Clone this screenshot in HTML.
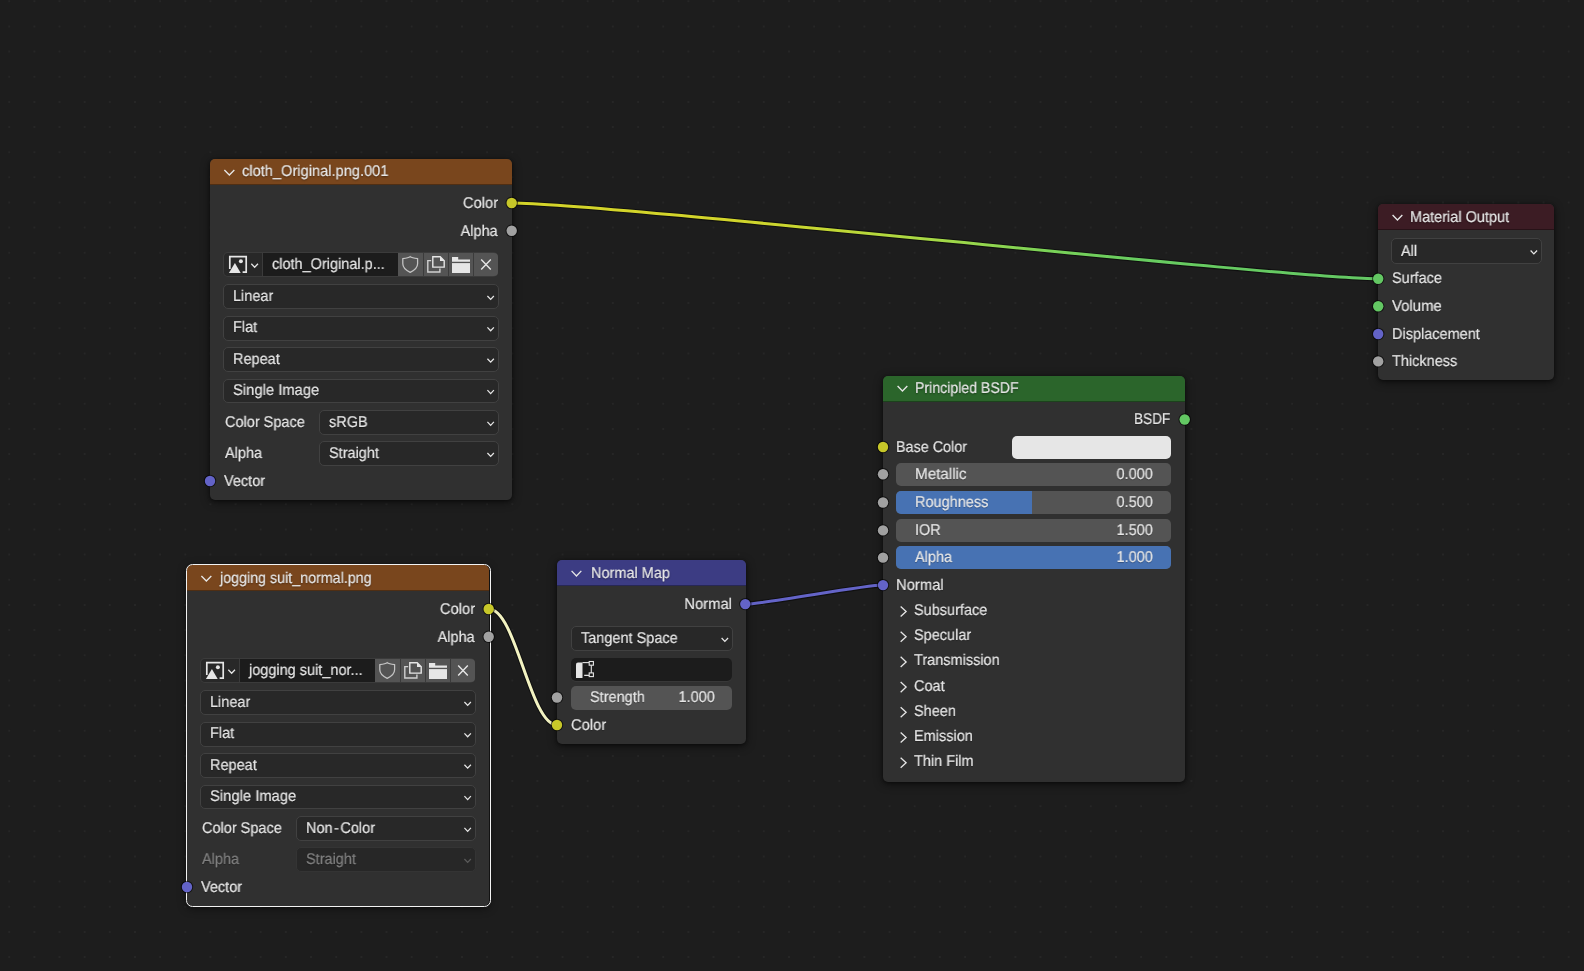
<!DOCTYPE html><html><head><meta charset="utf-8"><style>*{margin:0;padding:0}
html,body{width:1584px;height:971px;overflow:hidden;background:#1d1d1d}
body{position:relative;font-family:"Liberation Sans",sans-serif;font-size:15px}
div,svg{position:absolute}
.t{will-change:transform;white-space:pre;line-height:20px;font-size:15.5px;transform:scaleX(.935);text-rendering:geometricPrecision;-webkit-text-stroke:0.2px currentColor;text-shadow:0 1px 1px rgba(0,0,0,.3)}
.tr{text-align:right;transform-origin:100% 0}
</style></head><body><svg style="left:0;top:0" width="1584" height="971"><path d="M8.2 0.3h2v2h-2zM33.4 0.3h2v2h-2zM58.5 0.3h2v2h-2zM83.7 0.3h2v2h-2zM108.8 0.3h2v2h-2zM134.0 0.3h2v2h-2zM159.1 0.3h2v2h-2zM184.3 0.3h2v2h-2zM209.4 0.3h2v2h-2zM234.6 0.3h2v2h-2zM259.7 0.3h2v2h-2zM284.9 0.3h2v2h-2zM310.0 0.3h2v2h-2zM335.2 0.3h2v2h-2zM360.4 0.3h2v2h-2zM385.5 0.3h2v2h-2zM410.7 0.3h2v2h-2zM435.8 0.3h2v2h-2zM461.0 0.3h2v2h-2zM486.1 0.3h2v2h-2zM511.3 0.3h2v2h-2zM536.4 0.3h2v2h-2zM561.6 0.3h2v2h-2zM586.7 0.3h2v2h-2zM611.9 0.3h2v2h-2zM637.1 0.3h2v2h-2zM662.2 0.3h2v2h-2zM687.4 0.3h2v2h-2zM712.5 0.3h2v2h-2zM737.7 0.3h2v2h-2zM762.8 0.3h2v2h-2zM788.0 0.3h2v2h-2zM813.1 0.3h2v2h-2zM838.3 0.3h2v2h-2zM863.4 0.3h2v2h-2zM888.6 0.3h2v2h-2zM913.7 0.3h2v2h-2zM938.9 0.3h2v2h-2zM964.1 0.3h2v2h-2zM989.2 0.3h2v2h-2zM1014.4 0.3h2v2h-2zM1039.5 0.3h2v2h-2zM1064.7 0.3h2v2h-2zM1089.8 0.3h2v2h-2zM1115.0 0.3h2v2h-2zM1140.1 0.3h2v2h-2zM1165.3 0.3h2v2h-2zM1190.4 0.3h2v2h-2zM1215.6 0.3h2v2h-2zM1240.7 0.3h2v2h-2zM1265.9 0.3h2v2h-2zM1291.1 0.3h2v2h-2zM1316.2 0.3h2v2h-2zM1341.4 0.3h2v2h-2zM1366.5 0.3h2v2h-2zM1391.7 0.3h2v2h-2zM1416.8 0.3h2v2h-2zM1442.0 0.3h2v2h-2zM1467.1 0.3h2v2h-2zM1492.3 0.3h2v2h-2zM1517.4 0.3h2v2h-2zM1542.6 0.3h2v2h-2zM1567.7 0.3h2v2h-2zM8.2 25.4h2v2h-2zM33.4 25.4h2v2h-2zM58.5 25.4h2v2h-2zM83.7 25.4h2v2h-2zM108.8 25.4h2v2h-2zM134.0 25.4h2v2h-2zM159.1 25.4h2v2h-2zM184.3 25.4h2v2h-2zM209.4 25.4h2v2h-2zM234.6 25.4h2v2h-2zM259.7 25.4h2v2h-2zM284.9 25.4h2v2h-2zM310.0 25.4h2v2h-2zM335.2 25.4h2v2h-2zM360.4 25.4h2v2h-2zM385.5 25.4h2v2h-2zM410.7 25.4h2v2h-2zM435.8 25.4h2v2h-2zM461.0 25.4h2v2h-2zM486.1 25.4h2v2h-2zM511.3 25.4h2v2h-2zM536.4 25.4h2v2h-2zM561.6 25.4h2v2h-2zM586.7 25.4h2v2h-2zM611.9 25.4h2v2h-2zM637.1 25.4h2v2h-2zM662.2 25.4h2v2h-2zM687.4 25.4h2v2h-2zM712.5 25.4h2v2h-2zM737.7 25.4h2v2h-2zM762.8 25.4h2v2h-2zM788.0 25.4h2v2h-2zM813.1 25.4h2v2h-2zM838.3 25.4h2v2h-2zM863.4 25.4h2v2h-2zM888.6 25.4h2v2h-2zM913.7 25.4h2v2h-2zM938.9 25.4h2v2h-2zM964.1 25.4h2v2h-2zM989.2 25.4h2v2h-2zM1014.4 25.4h2v2h-2zM1039.5 25.4h2v2h-2zM1064.7 25.4h2v2h-2zM1089.8 25.4h2v2h-2zM1115.0 25.4h2v2h-2zM1140.1 25.4h2v2h-2zM1165.3 25.4h2v2h-2zM1190.4 25.4h2v2h-2zM1215.6 25.4h2v2h-2zM1240.7 25.4h2v2h-2zM1265.9 25.4h2v2h-2zM1291.1 25.4h2v2h-2zM1316.2 25.4h2v2h-2zM1341.4 25.4h2v2h-2zM1366.5 25.4h2v2h-2zM1391.7 25.4h2v2h-2zM1416.8 25.4h2v2h-2zM1442.0 25.4h2v2h-2zM1467.1 25.4h2v2h-2zM1492.3 25.4h2v2h-2zM1517.4 25.4h2v2h-2zM1542.6 25.4h2v2h-2zM1567.7 25.4h2v2h-2zM8.2 50.6h2v2h-2zM33.4 50.6h2v2h-2zM58.5 50.6h2v2h-2zM83.7 50.6h2v2h-2zM108.8 50.6h2v2h-2zM134.0 50.6h2v2h-2zM159.1 50.6h2v2h-2zM184.3 50.6h2v2h-2zM209.4 50.6h2v2h-2zM234.6 50.6h2v2h-2zM259.7 50.6h2v2h-2zM284.9 50.6h2v2h-2zM310.0 50.6h2v2h-2zM335.2 50.6h2v2h-2zM360.4 50.6h2v2h-2zM385.5 50.6h2v2h-2zM410.7 50.6h2v2h-2zM435.8 50.6h2v2h-2zM461.0 50.6h2v2h-2zM486.1 50.6h2v2h-2zM511.3 50.6h2v2h-2zM536.4 50.6h2v2h-2zM561.6 50.6h2v2h-2zM586.7 50.6h2v2h-2zM611.9 50.6h2v2h-2zM637.1 50.6h2v2h-2zM662.2 50.6h2v2h-2zM687.4 50.6h2v2h-2zM712.5 50.6h2v2h-2zM737.7 50.6h2v2h-2zM762.8 50.6h2v2h-2zM788.0 50.6h2v2h-2zM813.1 50.6h2v2h-2zM838.3 50.6h2v2h-2zM863.4 50.6h2v2h-2zM888.6 50.6h2v2h-2zM913.7 50.6h2v2h-2zM938.9 50.6h2v2h-2zM964.1 50.6h2v2h-2zM989.2 50.6h2v2h-2zM1014.4 50.6h2v2h-2zM1039.5 50.6h2v2h-2zM1064.7 50.6h2v2h-2zM1089.8 50.6h2v2h-2zM1115.0 50.6h2v2h-2zM1140.1 50.6h2v2h-2zM1165.3 50.6h2v2h-2zM1190.4 50.6h2v2h-2zM1215.6 50.6h2v2h-2zM1240.7 50.6h2v2h-2zM1265.9 50.6h2v2h-2zM1291.1 50.6h2v2h-2zM1316.2 50.6h2v2h-2zM1341.4 50.6h2v2h-2zM1366.5 50.6h2v2h-2zM1391.7 50.6h2v2h-2zM1416.8 50.6h2v2h-2zM1442.0 50.6h2v2h-2zM1467.1 50.6h2v2h-2zM1492.3 50.6h2v2h-2zM1517.4 50.6h2v2h-2zM1542.6 50.6h2v2h-2zM1567.7 50.6h2v2h-2zM8.2 75.7h2v2h-2zM33.4 75.7h2v2h-2zM58.5 75.7h2v2h-2zM83.7 75.7h2v2h-2zM108.8 75.7h2v2h-2zM134.0 75.7h2v2h-2zM159.1 75.7h2v2h-2zM184.3 75.7h2v2h-2zM209.4 75.7h2v2h-2zM234.6 75.7h2v2h-2zM259.7 75.7h2v2h-2zM284.9 75.7h2v2h-2zM310.0 75.7h2v2h-2zM335.2 75.7h2v2h-2zM360.4 75.7h2v2h-2zM385.5 75.7h2v2h-2zM410.7 75.7h2v2h-2zM435.8 75.7h2v2h-2zM461.0 75.7h2v2h-2zM486.1 75.7h2v2h-2zM511.3 75.7h2v2h-2zM536.4 75.7h2v2h-2zM561.6 75.7h2v2h-2zM586.7 75.7h2v2h-2zM611.9 75.7h2v2h-2zM637.1 75.7h2v2h-2zM662.2 75.7h2v2h-2zM687.4 75.7h2v2h-2zM712.5 75.7h2v2h-2zM737.7 75.7h2v2h-2zM762.8 75.7h2v2h-2zM788.0 75.7h2v2h-2zM813.1 75.7h2v2h-2zM838.3 75.7h2v2h-2zM863.4 75.7h2v2h-2zM888.6 75.7h2v2h-2zM913.7 75.7h2v2h-2zM938.9 75.7h2v2h-2zM964.1 75.7h2v2h-2zM989.2 75.7h2v2h-2zM1014.4 75.7h2v2h-2zM1039.5 75.7h2v2h-2zM1064.7 75.7h2v2h-2zM1089.8 75.7h2v2h-2zM1115.0 75.7h2v2h-2zM1140.1 75.7h2v2h-2zM1165.3 75.7h2v2h-2zM1190.4 75.7h2v2h-2zM1215.6 75.7h2v2h-2zM1240.7 75.7h2v2h-2zM1265.9 75.7h2v2h-2zM1291.1 75.7h2v2h-2zM1316.2 75.7h2v2h-2zM1341.4 75.7h2v2h-2zM1366.5 75.7h2v2h-2zM1391.7 75.7h2v2h-2zM1416.8 75.7h2v2h-2zM1442.0 75.7h2v2h-2zM1467.1 75.7h2v2h-2zM1492.3 75.7h2v2h-2zM1517.4 75.7h2v2h-2zM1542.6 75.7h2v2h-2zM1567.7 75.7h2v2h-2zM8.2 100.9h2v2h-2zM33.4 100.9h2v2h-2zM58.5 100.9h2v2h-2zM83.7 100.9h2v2h-2zM108.8 100.9h2v2h-2zM134.0 100.9h2v2h-2zM159.1 100.9h2v2h-2zM184.3 100.9h2v2h-2zM209.4 100.9h2v2h-2zM234.6 100.9h2v2h-2zM259.7 100.9h2v2h-2zM284.9 100.9h2v2h-2zM310.0 100.9h2v2h-2zM335.2 100.9h2v2h-2zM360.4 100.9h2v2h-2zM385.5 100.9h2v2h-2zM410.7 100.9h2v2h-2zM435.8 100.9h2v2h-2zM461.0 100.9h2v2h-2zM486.1 100.9h2v2h-2zM511.3 100.9h2v2h-2zM536.4 100.9h2v2h-2zM561.6 100.9h2v2h-2zM586.7 100.9h2v2h-2zM611.9 100.9h2v2h-2zM637.1 100.9h2v2h-2zM662.2 100.9h2v2h-2zM687.4 100.9h2v2h-2zM712.5 100.9h2v2h-2zM737.7 100.9h2v2h-2zM762.8 100.9h2v2h-2zM788.0 100.9h2v2h-2zM813.1 100.9h2v2h-2zM838.3 100.9h2v2h-2zM863.4 100.9h2v2h-2zM888.6 100.9h2v2h-2zM913.7 100.9h2v2h-2zM938.9 100.9h2v2h-2zM964.1 100.9h2v2h-2zM989.2 100.9h2v2h-2zM1014.4 100.9h2v2h-2zM1039.5 100.9h2v2h-2zM1064.7 100.9h2v2h-2zM1089.8 100.9h2v2h-2zM1115.0 100.9h2v2h-2zM1140.1 100.9h2v2h-2zM1165.3 100.9h2v2h-2zM1190.4 100.9h2v2h-2zM1215.6 100.9h2v2h-2zM1240.7 100.9h2v2h-2zM1265.9 100.9h2v2h-2zM1291.1 100.9h2v2h-2zM1316.2 100.9h2v2h-2zM1341.4 100.9h2v2h-2zM1366.5 100.9h2v2h-2zM1391.7 100.9h2v2h-2zM1416.8 100.9h2v2h-2zM1442.0 100.9h2v2h-2zM1467.1 100.9h2v2h-2zM1492.3 100.9h2v2h-2zM1517.4 100.9h2v2h-2zM1542.6 100.9h2v2h-2zM1567.7 100.9h2v2h-2zM8.2 126.0h2v2h-2zM33.4 126.0h2v2h-2zM58.5 126.0h2v2h-2zM83.7 126.0h2v2h-2zM108.8 126.0h2v2h-2zM134.0 126.0h2v2h-2zM159.1 126.0h2v2h-2zM184.3 126.0h2v2h-2zM209.4 126.0h2v2h-2zM234.6 126.0h2v2h-2zM259.7 126.0h2v2h-2zM284.9 126.0h2v2h-2zM310.0 126.0h2v2h-2zM335.2 126.0h2v2h-2zM360.4 126.0h2v2h-2zM385.5 126.0h2v2h-2zM410.7 126.0h2v2h-2zM435.8 126.0h2v2h-2zM461.0 126.0h2v2h-2zM486.1 126.0h2v2h-2zM511.3 126.0h2v2h-2zM536.4 126.0h2v2h-2zM561.6 126.0h2v2h-2zM586.7 126.0h2v2h-2zM611.9 126.0h2v2h-2zM637.1 126.0h2v2h-2zM662.2 126.0h2v2h-2zM687.4 126.0h2v2h-2zM712.5 126.0h2v2h-2zM737.7 126.0h2v2h-2zM762.8 126.0h2v2h-2zM788.0 126.0h2v2h-2zM813.1 126.0h2v2h-2zM838.3 126.0h2v2h-2zM863.4 126.0h2v2h-2zM888.6 126.0h2v2h-2zM913.7 126.0h2v2h-2zM938.9 126.0h2v2h-2zM964.1 126.0h2v2h-2zM989.2 126.0h2v2h-2zM1014.4 126.0h2v2h-2zM1039.5 126.0h2v2h-2zM1064.7 126.0h2v2h-2zM1089.8 126.0h2v2h-2zM1115.0 126.0h2v2h-2zM1140.1 126.0h2v2h-2zM1165.3 126.0h2v2h-2zM1190.4 126.0h2v2h-2zM1215.6 126.0h2v2h-2zM1240.7 126.0h2v2h-2zM1265.9 126.0h2v2h-2zM1291.1 126.0h2v2h-2zM1316.2 126.0h2v2h-2zM1341.4 126.0h2v2h-2zM1366.5 126.0h2v2h-2zM1391.7 126.0h2v2h-2zM1416.8 126.0h2v2h-2zM1442.0 126.0h2v2h-2zM1467.1 126.0h2v2h-2zM1492.3 126.0h2v2h-2zM1517.4 126.0h2v2h-2zM1542.6 126.0h2v2h-2zM1567.7 126.0h2v2h-2zM8.2 151.2h2v2h-2zM33.4 151.2h2v2h-2zM58.5 151.2h2v2h-2zM83.7 151.2h2v2h-2zM108.8 151.2h2v2h-2zM134.0 151.2h2v2h-2zM159.1 151.2h2v2h-2zM184.3 151.2h2v2h-2zM209.4 151.2h2v2h-2zM234.6 151.2h2v2h-2zM259.7 151.2h2v2h-2zM284.9 151.2h2v2h-2zM310.0 151.2h2v2h-2zM335.2 151.2h2v2h-2zM360.4 151.2h2v2h-2zM385.5 151.2h2v2h-2zM410.7 151.2h2v2h-2zM435.8 151.2h2v2h-2zM461.0 151.2h2v2h-2zM486.1 151.2h2v2h-2zM511.3 151.2h2v2h-2zM536.4 151.2h2v2h-2zM561.6 151.2h2v2h-2zM586.7 151.2h2v2h-2zM611.9 151.2h2v2h-2zM637.1 151.2h2v2h-2zM662.2 151.2h2v2h-2zM687.4 151.2h2v2h-2zM712.5 151.2h2v2h-2zM737.7 151.2h2v2h-2zM762.8 151.2h2v2h-2zM788.0 151.2h2v2h-2zM813.1 151.2h2v2h-2zM838.3 151.2h2v2h-2zM863.4 151.2h2v2h-2zM888.6 151.2h2v2h-2zM913.7 151.2h2v2h-2zM938.9 151.2h2v2h-2zM964.1 151.2h2v2h-2zM989.2 151.2h2v2h-2zM1014.4 151.2h2v2h-2zM1039.5 151.2h2v2h-2zM1064.7 151.2h2v2h-2zM1089.8 151.2h2v2h-2zM1115.0 151.2h2v2h-2zM1140.1 151.2h2v2h-2zM1165.3 151.2h2v2h-2zM1190.4 151.2h2v2h-2zM1215.6 151.2h2v2h-2zM1240.7 151.2h2v2h-2zM1265.9 151.2h2v2h-2zM1291.1 151.2h2v2h-2zM1316.2 151.2h2v2h-2zM1341.4 151.2h2v2h-2zM1366.5 151.2h2v2h-2zM1391.7 151.2h2v2h-2zM1416.8 151.2h2v2h-2zM1442.0 151.2h2v2h-2zM1467.1 151.2h2v2h-2zM1492.3 151.2h2v2h-2zM1517.4 151.2h2v2h-2zM1542.6 151.2h2v2h-2zM1567.7 151.2h2v2h-2zM8.2 176.3h2v2h-2zM33.4 176.3h2v2h-2zM58.5 176.3h2v2h-2zM83.7 176.3h2v2h-2zM108.8 176.3h2v2h-2zM134.0 176.3h2v2h-2zM159.1 176.3h2v2h-2zM184.3 176.3h2v2h-2zM209.4 176.3h2v2h-2zM234.6 176.3h2v2h-2zM259.7 176.3h2v2h-2zM284.9 176.3h2v2h-2zM310.0 176.3h2v2h-2zM335.2 176.3h2v2h-2zM360.4 176.3h2v2h-2zM385.5 176.3h2v2h-2zM410.7 176.3h2v2h-2zM435.8 176.3h2v2h-2zM461.0 176.3h2v2h-2zM486.1 176.3h2v2h-2zM511.3 176.3h2v2h-2zM536.4 176.3h2v2h-2zM561.6 176.3h2v2h-2zM586.7 176.3h2v2h-2zM611.9 176.3h2v2h-2zM637.1 176.3h2v2h-2zM662.2 176.3h2v2h-2zM687.4 176.3h2v2h-2zM712.5 176.3h2v2h-2zM737.7 176.3h2v2h-2zM762.8 176.3h2v2h-2zM788.0 176.3h2v2h-2zM813.1 176.3h2v2h-2zM838.3 176.3h2v2h-2zM863.4 176.3h2v2h-2zM888.6 176.3h2v2h-2zM913.7 176.3h2v2h-2zM938.9 176.3h2v2h-2zM964.1 176.3h2v2h-2zM989.2 176.3h2v2h-2zM1014.4 176.3h2v2h-2zM1039.5 176.3h2v2h-2zM1064.7 176.3h2v2h-2zM1089.8 176.3h2v2h-2zM1115.0 176.3h2v2h-2zM1140.1 176.3h2v2h-2zM1165.3 176.3h2v2h-2zM1190.4 176.3h2v2h-2zM1215.6 176.3h2v2h-2zM1240.7 176.3h2v2h-2zM1265.9 176.3h2v2h-2zM1291.1 176.3h2v2h-2zM1316.2 176.3h2v2h-2zM1341.4 176.3h2v2h-2zM1366.5 176.3h2v2h-2zM1391.7 176.3h2v2h-2zM1416.8 176.3h2v2h-2zM1442.0 176.3h2v2h-2zM1467.1 176.3h2v2h-2zM1492.3 176.3h2v2h-2zM1517.4 176.3h2v2h-2zM1542.6 176.3h2v2h-2zM1567.7 176.3h2v2h-2zM8.2 201.5h2v2h-2zM33.4 201.5h2v2h-2zM58.5 201.5h2v2h-2zM83.7 201.5h2v2h-2zM108.8 201.5h2v2h-2zM134.0 201.5h2v2h-2zM159.1 201.5h2v2h-2zM184.3 201.5h2v2h-2zM209.4 201.5h2v2h-2zM234.6 201.5h2v2h-2zM259.7 201.5h2v2h-2zM284.9 201.5h2v2h-2zM310.0 201.5h2v2h-2zM335.2 201.5h2v2h-2zM360.4 201.5h2v2h-2zM385.5 201.5h2v2h-2zM410.7 201.5h2v2h-2zM435.8 201.5h2v2h-2zM461.0 201.5h2v2h-2zM486.1 201.5h2v2h-2zM511.3 201.5h2v2h-2zM536.4 201.5h2v2h-2zM561.6 201.5h2v2h-2zM586.7 201.5h2v2h-2zM611.9 201.5h2v2h-2zM637.1 201.5h2v2h-2zM662.2 201.5h2v2h-2zM687.4 201.5h2v2h-2zM712.5 201.5h2v2h-2zM737.7 201.5h2v2h-2zM762.8 201.5h2v2h-2zM788.0 201.5h2v2h-2zM813.1 201.5h2v2h-2zM838.3 201.5h2v2h-2zM863.4 201.5h2v2h-2zM888.6 201.5h2v2h-2zM913.7 201.5h2v2h-2zM938.9 201.5h2v2h-2zM964.1 201.5h2v2h-2zM989.2 201.5h2v2h-2zM1014.4 201.5h2v2h-2zM1039.5 201.5h2v2h-2zM1064.7 201.5h2v2h-2zM1089.8 201.5h2v2h-2zM1115.0 201.5h2v2h-2zM1140.1 201.5h2v2h-2zM1165.3 201.5h2v2h-2zM1190.4 201.5h2v2h-2zM1215.6 201.5h2v2h-2zM1240.7 201.5h2v2h-2zM1265.9 201.5h2v2h-2zM1291.1 201.5h2v2h-2zM1316.2 201.5h2v2h-2zM1341.4 201.5h2v2h-2zM1366.5 201.5h2v2h-2zM1391.7 201.5h2v2h-2zM1416.8 201.5h2v2h-2zM1442.0 201.5h2v2h-2zM1467.1 201.5h2v2h-2zM1492.3 201.5h2v2h-2zM1517.4 201.5h2v2h-2zM1542.6 201.5h2v2h-2zM1567.7 201.5h2v2h-2zM8.2 226.6h2v2h-2zM33.4 226.6h2v2h-2zM58.5 226.6h2v2h-2zM83.7 226.6h2v2h-2zM108.8 226.6h2v2h-2zM134.0 226.6h2v2h-2zM159.1 226.6h2v2h-2zM184.3 226.6h2v2h-2zM209.4 226.6h2v2h-2zM234.6 226.6h2v2h-2zM259.7 226.6h2v2h-2zM284.9 226.6h2v2h-2zM310.0 226.6h2v2h-2zM335.2 226.6h2v2h-2zM360.4 226.6h2v2h-2zM385.5 226.6h2v2h-2zM410.7 226.6h2v2h-2zM435.8 226.6h2v2h-2zM461.0 226.6h2v2h-2zM486.1 226.6h2v2h-2zM511.3 226.6h2v2h-2zM536.4 226.6h2v2h-2zM561.6 226.6h2v2h-2zM586.7 226.6h2v2h-2zM611.9 226.6h2v2h-2zM637.1 226.6h2v2h-2zM662.2 226.6h2v2h-2zM687.4 226.6h2v2h-2zM712.5 226.6h2v2h-2zM737.7 226.6h2v2h-2zM762.8 226.6h2v2h-2zM788.0 226.6h2v2h-2zM813.1 226.6h2v2h-2zM838.3 226.6h2v2h-2zM863.4 226.6h2v2h-2zM888.6 226.6h2v2h-2zM913.7 226.6h2v2h-2zM938.9 226.6h2v2h-2zM964.1 226.6h2v2h-2zM989.2 226.6h2v2h-2zM1014.4 226.6h2v2h-2zM1039.5 226.6h2v2h-2zM1064.7 226.6h2v2h-2zM1089.8 226.6h2v2h-2zM1115.0 226.6h2v2h-2zM1140.1 226.6h2v2h-2zM1165.3 226.6h2v2h-2zM1190.4 226.6h2v2h-2zM1215.6 226.6h2v2h-2zM1240.7 226.6h2v2h-2zM1265.9 226.6h2v2h-2zM1291.1 226.6h2v2h-2zM1316.2 226.6h2v2h-2zM1341.4 226.6h2v2h-2zM1366.5 226.6h2v2h-2zM1391.7 226.6h2v2h-2zM1416.8 226.6h2v2h-2zM1442.0 226.6h2v2h-2zM1467.1 226.6h2v2h-2zM1492.3 226.6h2v2h-2zM1517.4 226.6h2v2h-2zM1542.6 226.6h2v2h-2zM1567.7 226.6h2v2h-2zM8.2 251.8h2v2h-2zM33.4 251.8h2v2h-2zM58.5 251.8h2v2h-2zM83.7 251.8h2v2h-2zM108.8 251.8h2v2h-2zM134.0 251.8h2v2h-2zM159.1 251.8h2v2h-2zM184.3 251.8h2v2h-2zM209.4 251.8h2v2h-2zM234.6 251.8h2v2h-2zM259.7 251.8h2v2h-2zM284.9 251.8h2v2h-2zM310.0 251.8h2v2h-2zM335.2 251.8h2v2h-2zM360.4 251.8h2v2h-2zM385.5 251.8h2v2h-2zM410.7 251.8h2v2h-2zM435.8 251.8h2v2h-2zM461.0 251.8h2v2h-2zM486.1 251.8h2v2h-2zM511.3 251.8h2v2h-2zM536.4 251.8h2v2h-2zM561.6 251.8h2v2h-2zM586.7 251.8h2v2h-2zM611.9 251.8h2v2h-2zM637.1 251.8h2v2h-2zM662.2 251.8h2v2h-2zM687.4 251.8h2v2h-2zM712.5 251.8h2v2h-2zM737.7 251.8h2v2h-2zM762.8 251.8h2v2h-2zM788.0 251.8h2v2h-2zM813.1 251.8h2v2h-2zM838.3 251.8h2v2h-2zM863.4 251.8h2v2h-2zM888.6 251.8h2v2h-2zM913.7 251.8h2v2h-2zM938.9 251.8h2v2h-2zM964.1 251.8h2v2h-2zM989.2 251.8h2v2h-2zM1014.4 251.8h2v2h-2zM1039.5 251.8h2v2h-2zM1064.7 251.8h2v2h-2zM1089.8 251.8h2v2h-2zM1115.0 251.8h2v2h-2zM1140.1 251.8h2v2h-2zM1165.3 251.8h2v2h-2zM1190.4 251.8h2v2h-2zM1215.6 251.8h2v2h-2zM1240.7 251.8h2v2h-2zM1265.9 251.8h2v2h-2zM1291.1 251.8h2v2h-2zM1316.2 251.8h2v2h-2zM1341.4 251.8h2v2h-2zM1366.5 251.8h2v2h-2zM1391.7 251.8h2v2h-2zM1416.8 251.8h2v2h-2zM1442.0 251.8h2v2h-2zM1467.1 251.8h2v2h-2zM1492.3 251.8h2v2h-2zM1517.4 251.8h2v2h-2zM1542.6 251.8h2v2h-2zM1567.7 251.8h2v2h-2zM8.2 277.0h2v2h-2zM33.4 277.0h2v2h-2zM58.5 277.0h2v2h-2zM83.7 277.0h2v2h-2zM108.8 277.0h2v2h-2zM134.0 277.0h2v2h-2zM159.1 277.0h2v2h-2zM184.3 277.0h2v2h-2zM209.4 277.0h2v2h-2zM234.6 277.0h2v2h-2zM259.7 277.0h2v2h-2zM284.9 277.0h2v2h-2zM310.0 277.0h2v2h-2zM335.2 277.0h2v2h-2zM360.4 277.0h2v2h-2zM385.5 277.0h2v2h-2zM410.7 277.0h2v2h-2zM435.8 277.0h2v2h-2zM461.0 277.0h2v2h-2zM486.1 277.0h2v2h-2zM511.3 277.0h2v2h-2zM536.4 277.0h2v2h-2zM561.6 277.0h2v2h-2zM586.7 277.0h2v2h-2zM611.9 277.0h2v2h-2zM637.1 277.0h2v2h-2zM662.2 277.0h2v2h-2zM687.4 277.0h2v2h-2zM712.5 277.0h2v2h-2zM737.7 277.0h2v2h-2zM762.8 277.0h2v2h-2zM788.0 277.0h2v2h-2zM813.1 277.0h2v2h-2zM838.3 277.0h2v2h-2zM863.4 277.0h2v2h-2zM888.6 277.0h2v2h-2zM913.7 277.0h2v2h-2zM938.9 277.0h2v2h-2zM964.1 277.0h2v2h-2zM989.2 277.0h2v2h-2zM1014.4 277.0h2v2h-2zM1039.5 277.0h2v2h-2zM1064.7 277.0h2v2h-2zM1089.8 277.0h2v2h-2zM1115.0 277.0h2v2h-2zM1140.1 277.0h2v2h-2zM1165.3 277.0h2v2h-2zM1190.4 277.0h2v2h-2zM1215.6 277.0h2v2h-2zM1240.7 277.0h2v2h-2zM1265.9 277.0h2v2h-2zM1291.1 277.0h2v2h-2zM1316.2 277.0h2v2h-2zM1341.4 277.0h2v2h-2zM1366.5 277.0h2v2h-2zM1391.7 277.0h2v2h-2zM1416.8 277.0h2v2h-2zM1442.0 277.0h2v2h-2zM1467.1 277.0h2v2h-2zM1492.3 277.0h2v2h-2zM1517.4 277.0h2v2h-2zM1542.6 277.0h2v2h-2zM1567.7 277.0h2v2h-2zM8.2 302.1h2v2h-2zM33.4 302.1h2v2h-2zM58.5 302.1h2v2h-2zM83.7 302.1h2v2h-2zM108.8 302.1h2v2h-2zM134.0 302.1h2v2h-2zM159.1 302.1h2v2h-2zM184.3 302.1h2v2h-2zM209.4 302.1h2v2h-2zM234.6 302.1h2v2h-2zM259.7 302.1h2v2h-2zM284.9 302.1h2v2h-2zM310.0 302.1h2v2h-2zM335.2 302.1h2v2h-2zM360.4 302.1h2v2h-2zM385.5 302.1h2v2h-2zM410.7 302.1h2v2h-2zM435.8 302.1h2v2h-2zM461.0 302.1h2v2h-2zM486.1 302.1h2v2h-2zM511.3 302.1h2v2h-2zM536.4 302.1h2v2h-2zM561.6 302.1h2v2h-2zM586.7 302.1h2v2h-2zM611.9 302.1h2v2h-2zM637.1 302.1h2v2h-2zM662.2 302.1h2v2h-2zM687.4 302.1h2v2h-2zM712.5 302.1h2v2h-2zM737.7 302.1h2v2h-2zM762.8 302.1h2v2h-2zM788.0 302.1h2v2h-2zM813.1 302.1h2v2h-2zM838.3 302.1h2v2h-2zM863.4 302.1h2v2h-2zM888.6 302.1h2v2h-2zM913.7 302.1h2v2h-2zM938.9 302.1h2v2h-2zM964.1 302.1h2v2h-2zM989.2 302.1h2v2h-2zM1014.4 302.1h2v2h-2zM1039.5 302.1h2v2h-2zM1064.7 302.1h2v2h-2zM1089.8 302.1h2v2h-2zM1115.0 302.1h2v2h-2zM1140.1 302.1h2v2h-2zM1165.3 302.1h2v2h-2zM1190.4 302.1h2v2h-2zM1215.6 302.1h2v2h-2zM1240.7 302.1h2v2h-2zM1265.9 302.1h2v2h-2zM1291.1 302.1h2v2h-2zM1316.2 302.1h2v2h-2zM1341.4 302.1h2v2h-2zM1366.5 302.1h2v2h-2zM1391.7 302.1h2v2h-2zM1416.8 302.1h2v2h-2zM1442.0 302.1h2v2h-2zM1467.1 302.1h2v2h-2zM1492.3 302.1h2v2h-2zM1517.4 302.1h2v2h-2zM1542.6 302.1h2v2h-2zM1567.7 302.1h2v2h-2zM8.2 327.3h2v2h-2zM33.4 327.3h2v2h-2zM58.5 327.3h2v2h-2zM83.7 327.3h2v2h-2zM108.8 327.3h2v2h-2zM134.0 327.3h2v2h-2zM159.1 327.3h2v2h-2zM184.3 327.3h2v2h-2zM209.4 327.3h2v2h-2zM234.6 327.3h2v2h-2zM259.7 327.3h2v2h-2zM284.9 327.3h2v2h-2zM310.0 327.3h2v2h-2zM335.2 327.3h2v2h-2zM360.4 327.3h2v2h-2zM385.5 327.3h2v2h-2zM410.7 327.3h2v2h-2zM435.8 327.3h2v2h-2zM461.0 327.3h2v2h-2zM486.1 327.3h2v2h-2zM511.3 327.3h2v2h-2zM536.4 327.3h2v2h-2zM561.6 327.3h2v2h-2zM586.7 327.3h2v2h-2zM611.9 327.3h2v2h-2zM637.1 327.3h2v2h-2zM662.2 327.3h2v2h-2zM687.4 327.3h2v2h-2zM712.5 327.3h2v2h-2zM737.7 327.3h2v2h-2zM762.8 327.3h2v2h-2zM788.0 327.3h2v2h-2zM813.1 327.3h2v2h-2zM838.3 327.3h2v2h-2zM863.4 327.3h2v2h-2zM888.6 327.3h2v2h-2zM913.7 327.3h2v2h-2zM938.9 327.3h2v2h-2zM964.1 327.3h2v2h-2zM989.2 327.3h2v2h-2zM1014.4 327.3h2v2h-2zM1039.5 327.3h2v2h-2zM1064.7 327.3h2v2h-2zM1089.8 327.3h2v2h-2zM1115.0 327.3h2v2h-2zM1140.1 327.3h2v2h-2zM1165.3 327.3h2v2h-2zM1190.4 327.3h2v2h-2zM1215.6 327.3h2v2h-2zM1240.7 327.3h2v2h-2zM1265.9 327.3h2v2h-2zM1291.1 327.3h2v2h-2zM1316.2 327.3h2v2h-2zM1341.4 327.3h2v2h-2zM1366.5 327.3h2v2h-2zM1391.7 327.3h2v2h-2zM1416.8 327.3h2v2h-2zM1442.0 327.3h2v2h-2zM1467.1 327.3h2v2h-2zM1492.3 327.3h2v2h-2zM1517.4 327.3h2v2h-2zM1542.6 327.3h2v2h-2zM1567.7 327.3h2v2h-2zM8.2 352.4h2v2h-2zM33.4 352.4h2v2h-2zM58.5 352.4h2v2h-2zM83.7 352.4h2v2h-2zM108.8 352.4h2v2h-2zM134.0 352.4h2v2h-2zM159.1 352.4h2v2h-2zM184.3 352.4h2v2h-2zM209.4 352.4h2v2h-2zM234.6 352.4h2v2h-2zM259.7 352.4h2v2h-2zM284.9 352.4h2v2h-2zM310.0 352.4h2v2h-2zM335.2 352.4h2v2h-2zM360.4 352.4h2v2h-2zM385.5 352.4h2v2h-2zM410.7 352.4h2v2h-2zM435.8 352.4h2v2h-2zM461.0 352.4h2v2h-2zM486.1 352.4h2v2h-2zM511.3 352.4h2v2h-2zM536.4 352.4h2v2h-2zM561.6 352.4h2v2h-2zM586.7 352.4h2v2h-2zM611.9 352.4h2v2h-2zM637.1 352.4h2v2h-2zM662.2 352.4h2v2h-2zM687.4 352.4h2v2h-2zM712.5 352.4h2v2h-2zM737.7 352.4h2v2h-2zM762.8 352.4h2v2h-2zM788.0 352.4h2v2h-2zM813.1 352.4h2v2h-2zM838.3 352.4h2v2h-2zM863.4 352.4h2v2h-2zM888.6 352.4h2v2h-2zM913.7 352.4h2v2h-2zM938.9 352.4h2v2h-2zM964.1 352.4h2v2h-2zM989.2 352.4h2v2h-2zM1014.4 352.4h2v2h-2zM1039.5 352.4h2v2h-2zM1064.7 352.4h2v2h-2zM1089.8 352.4h2v2h-2zM1115.0 352.4h2v2h-2zM1140.1 352.4h2v2h-2zM1165.3 352.4h2v2h-2zM1190.4 352.4h2v2h-2zM1215.6 352.4h2v2h-2zM1240.7 352.4h2v2h-2zM1265.9 352.4h2v2h-2zM1291.1 352.4h2v2h-2zM1316.2 352.4h2v2h-2zM1341.4 352.4h2v2h-2zM1366.5 352.4h2v2h-2zM1391.7 352.4h2v2h-2zM1416.8 352.4h2v2h-2zM1442.0 352.4h2v2h-2zM1467.1 352.4h2v2h-2zM1492.3 352.4h2v2h-2zM1517.4 352.4h2v2h-2zM1542.6 352.4h2v2h-2zM1567.7 352.4h2v2h-2zM8.2 377.6h2v2h-2zM33.4 377.6h2v2h-2zM58.5 377.6h2v2h-2zM83.7 377.6h2v2h-2zM108.8 377.6h2v2h-2zM134.0 377.6h2v2h-2zM159.1 377.6h2v2h-2zM184.3 377.6h2v2h-2zM209.4 377.6h2v2h-2zM234.6 377.6h2v2h-2zM259.7 377.6h2v2h-2zM284.9 377.6h2v2h-2zM310.0 377.6h2v2h-2zM335.2 377.6h2v2h-2zM360.4 377.6h2v2h-2zM385.5 377.6h2v2h-2zM410.7 377.6h2v2h-2zM435.8 377.6h2v2h-2zM461.0 377.6h2v2h-2zM486.1 377.6h2v2h-2zM511.3 377.6h2v2h-2zM536.4 377.6h2v2h-2zM561.6 377.6h2v2h-2zM586.7 377.6h2v2h-2zM611.9 377.6h2v2h-2zM637.1 377.6h2v2h-2zM662.2 377.6h2v2h-2zM687.4 377.6h2v2h-2zM712.5 377.6h2v2h-2zM737.7 377.6h2v2h-2zM762.8 377.6h2v2h-2zM788.0 377.6h2v2h-2zM813.1 377.6h2v2h-2zM838.3 377.6h2v2h-2zM863.4 377.6h2v2h-2zM888.6 377.6h2v2h-2zM913.7 377.6h2v2h-2zM938.9 377.6h2v2h-2zM964.1 377.6h2v2h-2zM989.2 377.6h2v2h-2zM1014.4 377.6h2v2h-2zM1039.5 377.6h2v2h-2zM1064.7 377.6h2v2h-2zM1089.8 377.6h2v2h-2zM1115.0 377.6h2v2h-2zM1140.1 377.6h2v2h-2zM1165.3 377.6h2v2h-2zM1190.4 377.6h2v2h-2zM1215.6 377.6h2v2h-2zM1240.7 377.6h2v2h-2zM1265.9 377.6h2v2h-2zM1291.1 377.6h2v2h-2zM1316.2 377.6h2v2h-2zM1341.4 377.6h2v2h-2zM1366.5 377.6h2v2h-2zM1391.7 377.6h2v2h-2zM1416.8 377.6h2v2h-2zM1442.0 377.6h2v2h-2zM1467.1 377.6h2v2h-2zM1492.3 377.6h2v2h-2zM1517.4 377.6h2v2h-2zM1542.6 377.6h2v2h-2zM1567.7 377.6h2v2h-2zM8.2 402.7h2v2h-2zM33.4 402.7h2v2h-2zM58.5 402.7h2v2h-2zM83.7 402.7h2v2h-2zM108.8 402.7h2v2h-2zM134.0 402.7h2v2h-2zM159.1 402.7h2v2h-2zM184.3 402.7h2v2h-2zM209.4 402.7h2v2h-2zM234.6 402.7h2v2h-2zM259.7 402.7h2v2h-2zM284.9 402.7h2v2h-2zM310.0 402.7h2v2h-2zM335.2 402.7h2v2h-2zM360.4 402.7h2v2h-2zM385.5 402.7h2v2h-2zM410.7 402.7h2v2h-2zM435.8 402.7h2v2h-2zM461.0 402.7h2v2h-2zM486.1 402.7h2v2h-2zM511.3 402.7h2v2h-2zM536.4 402.7h2v2h-2zM561.6 402.7h2v2h-2zM586.7 402.7h2v2h-2zM611.9 402.7h2v2h-2zM637.1 402.7h2v2h-2zM662.2 402.7h2v2h-2zM687.4 402.7h2v2h-2zM712.5 402.7h2v2h-2zM737.7 402.7h2v2h-2zM762.8 402.7h2v2h-2zM788.0 402.7h2v2h-2zM813.1 402.7h2v2h-2zM838.3 402.7h2v2h-2zM863.4 402.7h2v2h-2zM888.6 402.7h2v2h-2zM913.7 402.7h2v2h-2zM938.9 402.7h2v2h-2zM964.1 402.7h2v2h-2zM989.2 402.7h2v2h-2zM1014.4 402.7h2v2h-2zM1039.5 402.7h2v2h-2zM1064.7 402.7h2v2h-2zM1089.8 402.7h2v2h-2zM1115.0 402.7h2v2h-2zM1140.1 402.7h2v2h-2zM1165.3 402.7h2v2h-2zM1190.4 402.7h2v2h-2zM1215.6 402.7h2v2h-2zM1240.7 402.7h2v2h-2zM1265.9 402.7h2v2h-2zM1291.1 402.7h2v2h-2zM1316.2 402.7h2v2h-2zM1341.4 402.7h2v2h-2zM1366.5 402.7h2v2h-2zM1391.7 402.7h2v2h-2zM1416.8 402.7h2v2h-2zM1442.0 402.7h2v2h-2zM1467.1 402.7h2v2h-2zM1492.3 402.7h2v2h-2zM1517.4 402.7h2v2h-2zM1542.6 402.7h2v2h-2zM1567.7 402.7h2v2h-2zM8.2 427.9h2v2h-2zM33.4 427.9h2v2h-2zM58.5 427.9h2v2h-2zM83.7 427.9h2v2h-2zM108.8 427.9h2v2h-2zM134.0 427.9h2v2h-2zM159.1 427.9h2v2h-2zM184.3 427.9h2v2h-2zM209.4 427.9h2v2h-2zM234.6 427.9h2v2h-2zM259.7 427.9h2v2h-2zM284.9 427.9h2v2h-2zM310.0 427.9h2v2h-2zM335.2 427.9h2v2h-2zM360.4 427.9h2v2h-2zM385.5 427.9h2v2h-2zM410.7 427.9h2v2h-2zM435.8 427.9h2v2h-2zM461.0 427.9h2v2h-2zM486.1 427.9h2v2h-2zM511.3 427.9h2v2h-2zM536.4 427.9h2v2h-2zM561.6 427.9h2v2h-2zM586.7 427.9h2v2h-2zM611.9 427.9h2v2h-2zM637.1 427.9h2v2h-2zM662.2 427.9h2v2h-2zM687.4 427.9h2v2h-2zM712.5 427.9h2v2h-2zM737.7 427.9h2v2h-2zM762.8 427.9h2v2h-2zM788.0 427.9h2v2h-2zM813.1 427.9h2v2h-2zM838.3 427.9h2v2h-2zM863.4 427.9h2v2h-2zM888.6 427.9h2v2h-2zM913.7 427.9h2v2h-2zM938.9 427.9h2v2h-2zM964.1 427.9h2v2h-2zM989.2 427.9h2v2h-2zM1014.4 427.9h2v2h-2zM1039.5 427.9h2v2h-2zM1064.7 427.9h2v2h-2zM1089.8 427.9h2v2h-2zM1115.0 427.9h2v2h-2zM1140.1 427.9h2v2h-2zM1165.3 427.9h2v2h-2zM1190.4 427.9h2v2h-2zM1215.6 427.9h2v2h-2zM1240.7 427.9h2v2h-2zM1265.9 427.9h2v2h-2zM1291.1 427.9h2v2h-2zM1316.2 427.9h2v2h-2zM1341.4 427.9h2v2h-2zM1366.5 427.9h2v2h-2zM1391.7 427.9h2v2h-2zM1416.8 427.9h2v2h-2zM1442.0 427.9h2v2h-2zM1467.1 427.9h2v2h-2zM1492.3 427.9h2v2h-2zM1517.4 427.9h2v2h-2zM1542.6 427.9h2v2h-2zM1567.7 427.9h2v2h-2zM8.2 453.0h2v2h-2zM33.4 453.0h2v2h-2zM58.5 453.0h2v2h-2zM83.7 453.0h2v2h-2zM108.8 453.0h2v2h-2zM134.0 453.0h2v2h-2zM159.1 453.0h2v2h-2zM184.3 453.0h2v2h-2zM209.4 453.0h2v2h-2zM234.6 453.0h2v2h-2zM259.7 453.0h2v2h-2zM284.9 453.0h2v2h-2zM310.0 453.0h2v2h-2zM335.2 453.0h2v2h-2zM360.4 453.0h2v2h-2zM385.5 453.0h2v2h-2zM410.7 453.0h2v2h-2zM435.8 453.0h2v2h-2zM461.0 453.0h2v2h-2zM486.1 453.0h2v2h-2zM511.3 453.0h2v2h-2zM536.4 453.0h2v2h-2zM561.6 453.0h2v2h-2zM586.7 453.0h2v2h-2zM611.9 453.0h2v2h-2zM637.1 453.0h2v2h-2zM662.2 453.0h2v2h-2zM687.4 453.0h2v2h-2zM712.5 453.0h2v2h-2zM737.7 453.0h2v2h-2zM762.8 453.0h2v2h-2zM788.0 453.0h2v2h-2zM813.1 453.0h2v2h-2zM838.3 453.0h2v2h-2zM863.4 453.0h2v2h-2zM888.6 453.0h2v2h-2zM913.7 453.0h2v2h-2zM938.9 453.0h2v2h-2zM964.1 453.0h2v2h-2zM989.2 453.0h2v2h-2zM1014.4 453.0h2v2h-2zM1039.5 453.0h2v2h-2zM1064.7 453.0h2v2h-2zM1089.8 453.0h2v2h-2zM1115.0 453.0h2v2h-2zM1140.1 453.0h2v2h-2zM1165.3 453.0h2v2h-2zM1190.4 453.0h2v2h-2zM1215.6 453.0h2v2h-2zM1240.7 453.0h2v2h-2zM1265.9 453.0h2v2h-2zM1291.1 453.0h2v2h-2zM1316.2 453.0h2v2h-2zM1341.4 453.0h2v2h-2zM1366.5 453.0h2v2h-2zM1391.7 453.0h2v2h-2zM1416.8 453.0h2v2h-2zM1442.0 453.0h2v2h-2zM1467.1 453.0h2v2h-2zM1492.3 453.0h2v2h-2zM1517.4 453.0h2v2h-2zM1542.6 453.0h2v2h-2zM1567.7 453.0h2v2h-2zM8.2 478.2h2v2h-2zM33.4 478.2h2v2h-2zM58.5 478.2h2v2h-2zM83.7 478.2h2v2h-2zM108.8 478.2h2v2h-2zM134.0 478.2h2v2h-2zM159.1 478.2h2v2h-2zM184.3 478.2h2v2h-2zM209.4 478.2h2v2h-2zM234.6 478.2h2v2h-2zM259.7 478.2h2v2h-2zM284.9 478.2h2v2h-2zM310.0 478.2h2v2h-2zM335.2 478.2h2v2h-2zM360.4 478.2h2v2h-2zM385.5 478.2h2v2h-2zM410.7 478.2h2v2h-2zM435.8 478.2h2v2h-2zM461.0 478.2h2v2h-2zM486.1 478.2h2v2h-2zM511.3 478.2h2v2h-2zM536.4 478.2h2v2h-2zM561.6 478.2h2v2h-2zM586.7 478.2h2v2h-2zM611.9 478.2h2v2h-2zM637.1 478.2h2v2h-2zM662.2 478.2h2v2h-2zM687.4 478.2h2v2h-2zM712.5 478.2h2v2h-2zM737.7 478.2h2v2h-2zM762.8 478.2h2v2h-2zM788.0 478.2h2v2h-2zM813.1 478.2h2v2h-2zM838.3 478.2h2v2h-2zM863.4 478.2h2v2h-2zM888.6 478.2h2v2h-2zM913.7 478.2h2v2h-2zM938.9 478.2h2v2h-2zM964.1 478.2h2v2h-2zM989.2 478.2h2v2h-2zM1014.4 478.2h2v2h-2zM1039.5 478.2h2v2h-2zM1064.7 478.2h2v2h-2zM1089.8 478.2h2v2h-2zM1115.0 478.2h2v2h-2zM1140.1 478.2h2v2h-2zM1165.3 478.2h2v2h-2zM1190.4 478.2h2v2h-2zM1215.6 478.2h2v2h-2zM1240.7 478.2h2v2h-2zM1265.9 478.2h2v2h-2zM1291.1 478.2h2v2h-2zM1316.2 478.2h2v2h-2zM1341.4 478.2h2v2h-2zM1366.5 478.2h2v2h-2zM1391.7 478.2h2v2h-2zM1416.8 478.2h2v2h-2zM1442.0 478.2h2v2h-2zM1467.1 478.2h2v2h-2zM1492.3 478.2h2v2h-2zM1517.4 478.2h2v2h-2zM1542.6 478.2h2v2h-2zM1567.7 478.2h2v2h-2zM8.2 503.3h2v2h-2zM33.4 503.3h2v2h-2zM58.5 503.3h2v2h-2zM83.7 503.3h2v2h-2zM108.8 503.3h2v2h-2zM134.0 503.3h2v2h-2zM159.1 503.3h2v2h-2zM184.3 503.3h2v2h-2zM209.4 503.3h2v2h-2zM234.6 503.3h2v2h-2zM259.7 503.3h2v2h-2zM284.9 503.3h2v2h-2zM310.0 503.3h2v2h-2zM335.2 503.3h2v2h-2zM360.4 503.3h2v2h-2zM385.5 503.3h2v2h-2zM410.7 503.3h2v2h-2zM435.8 503.3h2v2h-2zM461.0 503.3h2v2h-2zM486.1 503.3h2v2h-2zM511.3 503.3h2v2h-2zM536.4 503.3h2v2h-2zM561.6 503.3h2v2h-2zM586.7 503.3h2v2h-2zM611.9 503.3h2v2h-2zM637.1 503.3h2v2h-2zM662.2 503.3h2v2h-2zM687.4 503.3h2v2h-2zM712.5 503.3h2v2h-2zM737.7 503.3h2v2h-2zM762.8 503.3h2v2h-2zM788.0 503.3h2v2h-2zM813.1 503.3h2v2h-2zM838.3 503.3h2v2h-2zM863.4 503.3h2v2h-2zM888.6 503.3h2v2h-2zM913.7 503.3h2v2h-2zM938.9 503.3h2v2h-2zM964.1 503.3h2v2h-2zM989.2 503.3h2v2h-2zM1014.4 503.3h2v2h-2zM1039.5 503.3h2v2h-2zM1064.7 503.3h2v2h-2zM1089.8 503.3h2v2h-2zM1115.0 503.3h2v2h-2zM1140.1 503.3h2v2h-2zM1165.3 503.3h2v2h-2zM1190.4 503.3h2v2h-2zM1215.6 503.3h2v2h-2zM1240.7 503.3h2v2h-2zM1265.9 503.3h2v2h-2zM1291.1 503.3h2v2h-2zM1316.2 503.3h2v2h-2zM1341.4 503.3h2v2h-2zM1366.5 503.3h2v2h-2zM1391.7 503.3h2v2h-2zM1416.8 503.3h2v2h-2zM1442.0 503.3h2v2h-2zM1467.1 503.3h2v2h-2zM1492.3 503.3h2v2h-2zM1517.4 503.3h2v2h-2zM1542.6 503.3h2v2h-2zM1567.7 503.3h2v2h-2zM8.2 528.5h2v2h-2zM33.4 528.5h2v2h-2zM58.5 528.5h2v2h-2zM83.7 528.5h2v2h-2zM108.8 528.5h2v2h-2zM134.0 528.5h2v2h-2zM159.1 528.5h2v2h-2zM184.3 528.5h2v2h-2zM209.4 528.5h2v2h-2zM234.6 528.5h2v2h-2zM259.7 528.5h2v2h-2zM284.9 528.5h2v2h-2zM310.0 528.5h2v2h-2zM335.2 528.5h2v2h-2zM360.4 528.5h2v2h-2zM385.5 528.5h2v2h-2zM410.7 528.5h2v2h-2zM435.8 528.5h2v2h-2zM461.0 528.5h2v2h-2zM486.1 528.5h2v2h-2zM511.3 528.5h2v2h-2zM536.4 528.5h2v2h-2zM561.6 528.5h2v2h-2zM586.7 528.5h2v2h-2zM611.9 528.5h2v2h-2zM637.1 528.5h2v2h-2zM662.2 528.5h2v2h-2zM687.4 528.5h2v2h-2zM712.5 528.5h2v2h-2zM737.7 528.5h2v2h-2zM762.8 528.5h2v2h-2zM788.0 528.5h2v2h-2zM813.1 528.5h2v2h-2zM838.3 528.5h2v2h-2zM863.4 528.5h2v2h-2zM888.6 528.5h2v2h-2zM913.7 528.5h2v2h-2zM938.9 528.5h2v2h-2zM964.1 528.5h2v2h-2zM989.2 528.5h2v2h-2zM1014.4 528.5h2v2h-2zM1039.5 528.5h2v2h-2zM1064.7 528.5h2v2h-2zM1089.8 528.5h2v2h-2zM1115.0 528.5h2v2h-2zM1140.1 528.5h2v2h-2zM1165.3 528.5h2v2h-2zM1190.4 528.5h2v2h-2zM1215.6 528.5h2v2h-2zM1240.7 528.5h2v2h-2zM1265.9 528.5h2v2h-2zM1291.1 528.5h2v2h-2zM1316.2 528.5h2v2h-2zM1341.4 528.5h2v2h-2zM1366.5 528.5h2v2h-2zM1391.7 528.5h2v2h-2zM1416.8 528.5h2v2h-2zM1442.0 528.5h2v2h-2zM1467.1 528.5h2v2h-2zM1492.3 528.5h2v2h-2zM1517.4 528.5h2v2h-2zM1542.6 528.5h2v2h-2zM1567.7 528.5h2v2h-2zM8.2 553.6h2v2h-2zM33.4 553.6h2v2h-2zM58.5 553.6h2v2h-2zM83.7 553.6h2v2h-2zM108.8 553.6h2v2h-2zM134.0 553.6h2v2h-2zM159.1 553.6h2v2h-2zM184.3 553.6h2v2h-2zM209.4 553.6h2v2h-2zM234.6 553.6h2v2h-2zM259.7 553.6h2v2h-2zM284.9 553.6h2v2h-2zM310.0 553.6h2v2h-2zM335.2 553.6h2v2h-2zM360.4 553.6h2v2h-2zM385.5 553.6h2v2h-2zM410.7 553.6h2v2h-2zM435.8 553.6h2v2h-2zM461.0 553.6h2v2h-2zM486.1 553.6h2v2h-2zM511.3 553.6h2v2h-2zM536.4 553.6h2v2h-2zM561.6 553.6h2v2h-2zM586.7 553.6h2v2h-2zM611.9 553.6h2v2h-2zM637.1 553.6h2v2h-2zM662.2 553.6h2v2h-2zM687.4 553.6h2v2h-2zM712.5 553.6h2v2h-2zM737.7 553.6h2v2h-2zM762.8 553.6h2v2h-2zM788.0 553.6h2v2h-2zM813.1 553.6h2v2h-2zM838.3 553.6h2v2h-2zM863.4 553.6h2v2h-2zM888.6 553.6h2v2h-2zM913.7 553.6h2v2h-2zM938.9 553.6h2v2h-2zM964.1 553.6h2v2h-2zM989.2 553.6h2v2h-2zM1014.4 553.6h2v2h-2zM1039.5 553.6h2v2h-2zM1064.7 553.6h2v2h-2zM1089.8 553.6h2v2h-2zM1115.0 553.6h2v2h-2zM1140.1 553.6h2v2h-2zM1165.3 553.6h2v2h-2zM1190.4 553.6h2v2h-2zM1215.6 553.6h2v2h-2zM1240.7 553.6h2v2h-2zM1265.9 553.6h2v2h-2zM1291.1 553.6h2v2h-2zM1316.2 553.6h2v2h-2zM1341.4 553.6h2v2h-2zM1366.5 553.6h2v2h-2zM1391.7 553.6h2v2h-2zM1416.8 553.6h2v2h-2zM1442.0 553.6h2v2h-2zM1467.1 553.6h2v2h-2zM1492.3 553.6h2v2h-2zM1517.4 553.6h2v2h-2zM1542.6 553.6h2v2h-2zM1567.7 553.6h2v2h-2zM8.2 578.8h2v2h-2zM33.4 578.8h2v2h-2zM58.5 578.8h2v2h-2zM83.7 578.8h2v2h-2zM108.8 578.8h2v2h-2zM134.0 578.8h2v2h-2zM159.1 578.8h2v2h-2zM184.3 578.8h2v2h-2zM209.4 578.8h2v2h-2zM234.6 578.8h2v2h-2zM259.7 578.8h2v2h-2zM284.9 578.8h2v2h-2zM310.0 578.8h2v2h-2zM335.2 578.8h2v2h-2zM360.4 578.8h2v2h-2zM385.5 578.8h2v2h-2zM410.7 578.8h2v2h-2zM435.8 578.8h2v2h-2zM461.0 578.8h2v2h-2zM486.1 578.8h2v2h-2zM511.3 578.8h2v2h-2zM536.4 578.8h2v2h-2zM561.6 578.8h2v2h-2zM586.7 578.8h2v2h-2zM611.9 578.8h2v2h-2zM637.1 578.8h2v2h-2zM662.2 578.8h2v2h-2zM687.4 578.8h2v2h-2zM712.5 578.8h2v2h-2zM737.7 578.8h2v2h-2zM762.8 578.8h2v2h-2zM788.0 578.8h2v2h-2zM813.1 578.8h2v2h-2zM838.3 578.8h2v2h-2zM863.4 578.8h2v2h-2zM888.6 578.8h2v2h-2zM913.7 578.8h2v2h-2zM938.9 578.8h2v2h-2zM964.1 578.8h2v2h-2zM989.2 578.8h2v2h-2zM1014.4 578.8h2v2h-2zM1039.5 578.8h2v2h-2zM1064.7 578.8h2v2h-2zM1089.8 578.8h2v2h-2zM1115.0 578.8h2v2h-2zM1140.1 578.8h2v2h-2zM1165.3 578.8h2v2h-2zM1190.4 578.8h2v2h-2zM1215.6 578.8h2v2h-2zM1240.7 578.8h2v2h-2zM1265.9 578.8h2v2h-2zM1291.1 578.8h2v2h-2zM1316.2 578.8h2v2h-2zM1341.4 578.8h2v2h-2zM1366.5 578.8h2v2h-2zM1391.7 578.8h2v2h-2zM1416.8 578.8h2v2h-2zM1442.0 578.8h2v2h-2zM1467.1 578.8h2v2h-2zM1492.3 578.8h2v2h-2zM1517.4 578.8h2v2h-2zM1542.6 578.8h2v2h-2zM1567.7 578.8h2v2h-2zM8.2 604.0h2v2h-2zM33.4 604.0h2v2h-2zM58.5 604.0h2v2h-2zM83.7 604.0h2v2h-2zM108.8 604.0h2v2h-2zM134.0 604.0h2v2h-2zM159.1 604.0h2v2h-2zM184.3 604.0h2v2h-2zM209.4 604.0h2v2h-2zM234.6 604.0h2v2h-2zM259.7 604.0h2v2h-2zM284.9 604.0h2v2h-2zM310.0 604.0h2v2h-2zM335.2 604.0h2v2h-2zM360.4 604.0h2v2h-2zM385.5 604.0h2v2h-2zM410.7 604.0h2v2h-2zM435.8 604.0h2v2h-2zM461.0 604.0h2v2h-2zM486.1 604.0h2v2h-2zM511.3 604.0h2v2h-2zM536.4 604.0h2v2h-2zM561.6 604.0h2v2h-2zM586.7 604.0h2v2h-2zM611.9 604.0h2v2h-2zM637.1 604.0h2v2h-2zM662.2 604.0h2v2h-2zM687.4 604.0h2v2h-2zM712.5 604.0h2v2h-2zM737.7 604.0h2v2h-2zM762.8 604.0h2v2h-2zM788.0 604.0h2v2h-2zM813.1 604.0h2v2h-2zM838.3 604.0h2v2h-2zM863.4 604.0h2v2h-2zM888.6 604.0h2v2h-2zM913.7 604.0h2v2h-2zM938.9 604.0h2v2h-2zM964.1 604.0h2v2h-2zM989.2 604.0h2v2h-2zM1014.4 604.0h2v2h-2zM1039.5 604.0h2v2h-2zM1064.7 604.0h2v2h-2zM1089.8 604.0h2v2h-2zM1115.0 604.0h2v2h-2zM1140.1 604.0h2v2h-2zM1165.3 604.0h2v2h-2zM1190.4 604.0h2v2h-2zM1215.6 604.0h2v2h-2zM1240.7 604.0h2v2h-2zM1265.9 604.0h2v2h-2zM1291.1 604.0h2v2h-2zM1316.2 604.0h2v2h-2zM1341.4 604.0h2v2h-2zM1366.5 604.0h2v2h-2zM1391.7 604.0h2v2h-2zM1416.8 604.0h2v2h-2zM1442.0 604.0h2v2h-2zM1467.1 604.0h2v2h-2zM1492.3 604.0h2v2h-2zM1517.4 604.0h2v2h-2zM1542.6 604.0h2v2h-2zM1567.7 604.0h2v2h-2zM8.2 629.1h2v2h-2zM33.4 629.1h2v2h-2zM58.5 629.1h2v2h-2zM83.7 629.1h2v2h-2zM108.8 629.1h2v2h-2zM134.0 629.1h2v2h-2zM159.1 629.1h2v2h-2zM184.3 629.1h2v2h-2zM209.4 629.1h2v2h-2zM234.6 629.1h2v2h-2zM259.7 629.1h2v2h-2zM284.9 629.1h2v2h-2zM310.0 629.1h2v2h-2zM335.2 629.1h2v2h-2zM360.4 629.1h2v2h-2zM385.5 629.1h2v2h-2zM410.7 629.1h2v2h-2zM435.8 629.1h2v2h-2zM461.0 629.1h2v2h-2zM486.1 629.1h2v2h-2zM511.3 629.1h2v2h-2zM536.4 629.1h2v2h-2zM561.6 629.1h2v2h-2zM586.7 629.1h2v2h-2zM611.9 629.1h2v2h-2zM637.1 629.1h2v2h-2zM662.2 629.1h2v2h-2zM687.4 629.1h2v2h-2zM712.5 629.1h2v2h-2zM737.7 629.1h2v2h-2zM762.8 629.1h2v2h-2zM788.0 629.1h2v2h-2zM813.1 629.1h2v2h-2zM838.3 629.1h2v2h-2zM863.4 629.1h2v2h-2zM888.6 629.1h2v2h-2zM913.7 629.1h2v2h-2zM938.9 629.1h2v2h-2zM964.1 629.1h2v2h-2zM989.2 629.1h2v2h-2zM1014.4 629.1h2v2h-2zM1039.5 629.1h2v2h-2zM1064.7 629.1h2v2h-2zM1089.8 629.1h2v2h-2zM1115.0 629.1h2v2h-2zM1140.1 629.1h2v2h-2zM1165.3 629.1h2v2h-2zM1190.4 629.1h2v2h-2zM1215.6 629.1h2v2h-2zM1240.7 629.1h2v2h-2zM1265.9 629.1h2v2h-2zM1291.1 629.1h2v2h-2zM1316.2 629.1h2v2h-2zM1341.4 629.1h2v2h-2zM1366.5 629.1h2v2h-2zM1391.7 629.1h2v2h-2zM1416.8 629.1h2v2h-2zM1442.0 629.1h2v2h-2zM1467.1 629.1h2v2h-2zM1492.3 629.1h2v2h-2zM1517.4 629.1h2v2h-2zM1542.6 629.1h2v2h-2zM1567.7 629.1h2v2h-2zM8.2 654.3h2v2h-2zM33.4 654.3h2v2h-2zM58.5 654.3h2v2h-2zM83.7 654.3h2v2h-2zM108.8 654.3h2v2h-2zM134.0 654.3h2v2h-2zM159.1 654.3h2v2h-2zM184.3 654.3h2v2h-2zM209.4 654.3h2v2h-2zM234.6 654.3h2v2h-2zM259.7 654.3h2v2h-2zM284.9 654.3h2v2h-2zM310.0 654.3h2v2h-2zM335.2 654.3h2v2h-2zM360.4 654.3h2v2h-2zM385.5 654.3h2v2h-2zM410.7 654.3h2v2h-2zM435.8 654.3h2v2h-2zM461.0 654.3h2v2h-2zM486.1 654.3h2v2h-2zM511.3 654.3h2v2h-2zM536.4 654.3h2v2h-2zM561.6 654.3h2v2h-2zM586.7 654.3h2v2h-2zM611.9 654.3h2v2h-2zM637.1 654.3h2v2h-2zM662.2 654.3h2v2h-2zM687.4 654.3h2v2h-2zM712.5 654.3h2v2h-2zM737.7 654.3h2v2h-2zM762.8 654.3h2v2h-2zM788.0 654.3h2v2h-2zM813.1 654.3h2v2h-2zM838.3 654.3h2v2h-2zM863.4 654.3h2v2h-2zM888.6 654.3h2v2h-2zM913.7 654.3h2v2h-2zM938.9 654.3h2v2h-2zM964.1 654.3h2v2h-2zM989.2 654.3h2v2h-2zM1014.4 654.3h2v2h-2zM1039.5 654.3h2v2h-2zM1064.7 654.3h2v2h-2zM1089.8 654.3h2v2h-2zM1115.0 654.3h2v2h-2zM1140.1 654.3h2v2h-2zM1165.3 654.3h2v2h-2zM1190.4 654.3h2v2h-2zM1215.6 654.3h2v2h-2zM1240.7 654.3h2v2h-2zM1265.9 654.3h2v2h-2zM1291.1 654.3h2v2h-2zM1316.2 654.3h2v2h-2zM1341.4 654.3h2v2h-2zM1366.5 654.3h2v2h-2zM1391.7 654.3h2v2h-2zM1416.8 654.3h2v2h-2zM1442.0 654.3h2v2h-2zM1467.1 654.3h2v2h-2zM1492.3 654.3h2v2h-2zM1517.4 654.3h2v2h-2zM1542.6 654.3h2v2h-2zM1567.7 654.3h2v2h-2zM8.2 679.4h2v2h-2zM33.4 679.4h2v2h-2zM58.5 679.4h2v2h-2zM83.7 679.4h2v2h-2zM108.8 679.4h2v2h-2zM134.0 679.4h2v2h-2zM159.1 679.4h2v2h-2zM184.3 679.4h2v2h-2zM209.4 679.4h2v2h-2zM234.6 679.4h2v2h-2zM259.7 679.4h2v2h-2zM284.9 679.4h2v2h-2zM310.0 679.4h2v2h-2zM335.2 679.4h2v2h-2zM360.4 679.4h2v2h-2zM385.5 679.4h2v2h-2zM410.7 679.4h2v2h-2zM435.8 679.4h2v2h-2zM461.0 679.4h2v2h-2zM486.1 679.4h2v2h-2zM511.3 679.4h2v2h-2zM536.4 679.4h2v2h-2zM561.6 679.4h2v2h-2zM586.7 679.4h2v2h-2zM611.9 679.4h2v2h-2zM637.1 679.4h2v2h-2zM662.2 679.4h2v2h-2zM687.4 679.4h2v2h-2zM712.5 679.4h2v2h-2zM737.7 679.4h2v2h-2zM762.8 679.4h2v2h-2zM788.0 679.4h2v2h-2zM813.1 679.4h2v2h-2zM838.3 679.4h2v2h-2zM863.4 679.4h2v2h-2zM888.6 679.4h2v2h-2zM913.7 679.4h2v2h-2zM938.9 679.4h2v2h-2zM964.1 679.4h2v2h-2zM989.2 679.4h2v2h-2zM1014.4 679.4h2v2h-2zM1039.5 679.4h2v2h-2zM1064.7 679.4h2v2h-2zM1089.8 679.4h2v2h-2zM1115.0 679.4h2v2h-2zM1140.1 679.4h2v2h-2zM1165.3 679.4h2v2h-2zM1190.4 679.4h2v2h-2zM1215.6 679.4h2v2h-2zM1240.7 679.4h2v2h-2zM1265.9 679.4h2v2h-2zM1291.1 679.4h2v2h-2zM1316.2 679.4h2v2h-2zM1341.4 679.4h2v2h-2zM1366.5 679.4h2v2h-2zM1391.7 679.4h2v2h-2zM1416.8 679.4h2v2h-2zM1442.0 679.4h2v2h-2zM1467.1 679.4h2v2h-2zM1492.3 679.4h2v2h-2zM1517.4 679.4h2v2h-2zM1542.6 679.4h2v2h-2zM1567.7 679.4h2v2h-2zM8.2 704.6h2v2h-2zM33.4 704.6h2v2h-2zM58.5 704.6h2v2h-2zM83.7 704.6h2v2h-2zM108.8 704.6h2v2h-2zM134.0 704.6h2v2h-2zM159.1 704.6h2v2h-2zM184.3 704.6h2v2h-2zM209.4 704.6h2v2h-2zM234.6 704.6h2v2h-2zM259.7 704.6h2v2h-2zM284.9 704.6h2v2h-2zM310.0 704.6h2v2h-2zM335.2 704.6h2v2h-2zM360.4 704.6h2v2h-2zM385.5 704.6h2v2h-2zM410.7 704.6h2v2h-2zM435.8 704.6h2v2h-2zM461.0 704.6h2v2h-2zM486.1 704.6h2v2h-2zM511.3 704.6h2v2h-2zM536.4 704.6h2v2h-2zM561.6 704.6h2v2h-2zM586.7 704.6h2v2h-2zM611.9 704.6h2v2h-2zM637.1 704.6h2v2h-2zM662.2 704.6h2v2h-2zM687.4 704.6h2v2h-2zM712.5 704.6h2v2h-2zM737.7 704.6h2v2h-2zM762.8 704.6h2v2h-2zM788.0 704.6h2v2h-2zM813.1 704.6h2v2h-2zM838.3 704.6h2v2h-2zM863.4 704.6h2v2h-2zM888.6 704.6h2v2h-2zM913.7 704.6h2v2h-2zM938.9 704.6h2v2h-2zM964.1 704.6h2v2h-2zM989.2 704.6h2v2h-2zM1014.4 704.6h2v2h-2zM1039.5 704.6h2v2h-2zM1064.7 704.6h2v2h-2zM1089.8 704.6h2v2h-2zM1115.0 704.6h2v2h-2zM1140.1 704.6h2v2h-2zM1165.3 704.6h2v2h-2zM1190.4 704.6h2v2h-2zM1215.6 704.6h2v2h-2zM1240.7 704.6h2v2h-2zM1265.9 704.6h2v2h-2zM1291.1 704.6h2v2h-2zM1316.2 704.6h2v2h-2zM1341.4 704.6h2v2h-2zM1366.5 704.6h2v2h-2zM1391.7 704.6h2v2h-2zM1416.8 704.6h2v2h-2zM1442.0 704.6h2v2h-2zM1467.1 704.6h2v2h-2zM1492.3 704.6h2v2h-2zM1517.4 704.6h2v2h-2zM1542.6 704.6h2v2h-2zM1567.7 704.6h2v2h-2zM8.2 729.7h2v2h-2zM33.4 729.7h2v2h-2zM58.5 729.7h2v2h-2zM83.7 729.7h2v2h-2zM108.8 729.7h2v2h-2zM134.0 729.7h2v2h-2zM159.1 729.7h2v2h-2zM184.3 729.7h2v2h-2zM209.4 729.7h2v2h-2zM234.6 729.7h2v2h-2zM259.7 729.7h2v2h-2zM284.9 729.7h2v2h-2zM310.0 729.7h2v2h-2zM335.2 729.7h2v2h-2zM360.4 729.7h2v2h-2zM385.5 729.7h2v2h-2zM410.7 729.7h2v2h-2zM435.8 729.7h2v2h-2zM461.0 729.7h2v2h-2zM486.1 729.7h2v2h-2zM511.3 729.7h2v2h-2zM536.4 729.7h2v2h-2zM561.6 729.7h2v2h-2zM586.7 729.7h2v2h-2zM611.9 729.7h2v2h-2zM637.1 729.7h2v2h-2zM662.2 729.7h2v2h-2zM687.4 729.7h2v2h-2zM712.5 729.7h2v2h-2zM737.7 729.7h2v2h-2zM762.8 729.7h2v2h-2zM788.0 729.7h2v2h-2zM813.1 729.7h2v2h-2zM838.3 729.7h2v2h-2zM863.4 729.7h2v2h-2zM888.6 729.7h2v2h-2zM913.7 729.7h2v2h-2zM938.9 729.7h2v2h-2zM964.1 729.7h2v2h-2zM989.2 729.7h2v2h-2zM1014.4 729.7h2v2h-2zM1039.5 729.7h2v2h-2zM1064.7 729.7h2v2h-2zM1089.8 729.7h2v2h-2zM1115.0 729.7h2v2h-2zM1140.1 729.7h2v2h-2zM1165.3 729.7h2v2h-2zM1190.4 729.7h2v2h-2zM1215.6 729.7h2v2h-2zM1240.7 729.7h2v2h-2zM1265.9 729.7h2v2h-2zM1291.1 729.7h2v2h-2zM1316.2 729.7h2v2h-2zM1341.4 729.7h2v2h-2zM1366.5 729.7h2v2h-2zM1391.7 729.7h2v2h-2zM1416.8 729.7h2v2h-2zM1442.0 729.7h2v2h-2zM1467.1 729.7h2v2h-2zM1492.3 729.7h2v2h-2zM1517.4 729.7h2v2h-2zM1542.6 729.7h2v2h-2zM1567.7 729.7h2v2h-2zM8.2 754.9h2v2h-2zM33.4 754.9h2v2h-2zM58.5 754.9h2v2h-2zM83.7 754.9h2v2h-2zM108.8 754.9h2v2h-2zM134.0 754.9h2v2h-2zM159.1 754.9h2v2h-2zM184.3 754.9h2v2h-2zM209.4 754.9h2v2h-2zM234.6 754.9h2v2h-2zM259.7 754.9h2v2h-2zM284.9 754.9h2v2h-2zM310.0 754.9h2v2h-2zM335.2 754.9h2v2h-2zM360.4 754.9h2v2h-2zM385.5 754.9h2v2h-2zM410.7 754.9h2v2h-2zM435.8 754.9h2v2h-2zM461.0 754.9h2v2h-2zM486.1 754.9h2v2h-2zM511.3 754.9h2v2h-2zM536.4 754.9h2v2h-2zM561.6 754.9h2v2h-2zM586.7 754.9h2v2h-2zM611.9 754.9h2v2h-2zM637.1 754.9h2v2h-2zM662.2 754.9h2v2h-2zM687.4 754.9h2v2h-2zM712.5 754.9h2v2h-2zM737.7 754.9h2v2h-2zM762.8 754.9h2v2h-2zM788.0 754.9h2v2h-2zM813.1 754.9h2v2h-2zM838.3 754.9h2v2h-2zM863.4 754.9h2v2h-2zM888.6 754.9h2v2h-2zM913.7 754.9h2v2h-2zM938.9 754.9h2v2h-2zM964.1 754.9h2v2h-2zM989.2 754.9h2v2h-2zM1014.4 754.9h2v2h-2zM1039.5 754.9h2v2h-2zM1064.7 754.9h2v2h-2zM1089.8 754.9h2v2h-2zM1115.0 754.9h2v2h-2zM1140.1 754.9h2v2h-2zM1165.3 754.9h2v2h-2zM1190.4 754.9h2v2h-2zM1215.6 754.9h2v2h-2zM1240.7 754.9h2v2h-2zM1265.9 754.9h2v2h-2zM1291.1 754.9h2v2h-2zM1316.2 754.9h2v2h-2zM1341.4 754.9h2v2h-2zM1366.5 754.9h2v2h-2zM1391.7 754.9h2v2h-2zM1416.8 754.9h2v2h-2zM1442.0 754.9h2v2h-2zM1467.1 754.9h2v2h-2zM1492.3 754.9h2v2h-2zM1517.4 754.9h2v2h-2zM1542.6 754.9h2v2h-2zM1567.7 754.9h2v2h-2zM8.2 780.0h2v2h-2zM33.4 780.0h2v2h-2zM58.5 780.0h2v2h-2zM83.7 780.0h2v2h-2zM108.8 780.0h2v2h-2zM134.0 780.0h2v2h-2zM159.1 780.0h2v2h-2zM184.3 780.0h2v2h-2zM209.4 780.0h2v2h-2zM234.6 780.0h2v2h-2zM259.7 780.0h2v2h-2zM284.9 780.0h2v2h-2zM310.0 780.0h2v2h-2zM335.2 780.0h2v2h-2zM360.4 780.0h2v2h-2zM385.5 780.0h2v2h-2zM410.7 780.0h2v2h-2zM435.8 780.0h2v2h-2zM461.0 780.0h2v2h-2zM486.1 780.0h2v2h-2zM511.3 780.0h2v2h-2zM536.4 780.0h2v2h-2zM561.6 780.0h2v2h-2zM586.7 780.0h2v2h-2zM611.9 780.0h2v2h-2zM637.1 780.0h2v2h-2zM662.2 780.0h2v2h-2zM687.4 780.0h2v2h-2zM712.5 780.0h2v2h-2zM737.7 780.0h2v2h-2zM762.8 780.0h2v2h-2zM788.0 780.0h2v2h-2zM813.1 780.0h2v2h-2zM838.3 780.0h2v2h-2zM863.4 780.0h2v2h-2zM888.6 780.0h2v2h-2zM913.7 780.0h2v2h-2zM938.9 780.0h2v2h-2zM964.1 780.0h2v2h-2zM989.2 780.0h2v2h-2zM1014.4 780.0h2v2h-2zM1039.5 780.0h2v2h-2zM1064.7 780.0h2v2h-2zM1089.8 780.0h2v2h-2zM1115.0 780.0h2v2h-2zM1140.1 780.0h2v2h-2zM1165.3 780.0h2v2h-2zM1190.4 780.0h2v2h-2zM1215.6 780.0h2v2h-2zM1240.7 780.0h2v2h-2zM1265.9 780.0h2v2h-2zM1291.1 780.0h2v2h-2zM1316.2 780.0h2v2h-2zM1341.4 780.0h2v2h-2zM1366.5 780.0h2v2h-2zM1391.7 780.0h2v2h-2zM1416.8 780.0h2v2h-2zM1442.0 780.0h2v2h-2zM1467.1 780.0h2v2h-2zM1492.3 780.0h2v2h-2zM1517.4 780.0h2v2h-2zM1542.6 780.0h2v2h-2zM1567.7 780.0h2v2h-2zM8.2 805.2h2v2h-2zM33.4 805.2h2v2h-2zM58.5 805.2h2v2h-2zM83.7 805.2h2v2h-2zM108.8 805.2h2v2h-2zM134.0 805.2h2v2h-2zM159.1 805.2h2v2h-2zM184.3 805.2h2v2h-2zM209.4 805.2h2v2h-2zM234.6 805.2h2v2h-2zM259.7 805.2h2v2h-2zM284.9 805.2h2v2h-2zM310.0 805.2h2v2h-2zM335.2 805.2h2v2h-2zM360.4 805.2h2v2h-2zM385.5 805.2h2v2h-2zM410.7 805.2h2v2h-2zM435.8 805.2h2v2h-2zM461.0 805.2h2v2h-2zM486.1 805.2h2v2h-2zM511.3 805.2h2v2h-2zM536.4 805.2h2v2h-2zM561.6 805.2h2v2h-2zM586.7 805.2h2v2h-2zM611.9 805.2h2v2h-2zM637.1 805.2h2v2h-2zM662.2 805.2h2v2h-2zM687.4 805.2h2v2h-2zM712.5 805.2h2v2h-2zM737.7 805.2h2v2h-2zM762.8 805.2h2v2h-2zM788.0 805.2h2v2h-2zM813.1 805.2h2v2h-2zM838.3 805.2h2v2h-2zM863.4 805.2h2v2h-2zM888.6 805.2h2v2h-2zM913.7 805.2h2v2h-2zM938.9 805.2h2v2h-2zM964.1 805.2h2v2h-2zM989.2 805.2h2v2h-2zM1014.4 805.2h2v2h-2zM1039.5 805.2h2v2h-2zM1064.7 805.2h2v2h-2zM1089.8 805.2h2v2h-2zM1115.0 805.2h2v2h-2zM1140.1 805.2h2v2h-2zM1165.3 805.2h2v2h-2zM1190.4 805.2h2v2h-2zM1215.6 805.2h2v2h-2zM1240.7 805.2h2v2h-2zM1265.9 805.2h2v2h-2zM1291.1 805.2h2v2h-2zM1316.2 805.2h2v2h-2zM1341.4 805.2h2v2h-2zM1366.5 805.2h2v2h-2zM1391.7 805.2h2v2h-2zM1416.8 805.2h2v2h-2zM1442.0 805.2h2v2h-2zM1467.1 805.2h2v2h-2zM1492.3 805.2h2v2h-2zM1517.4 805.2h2v2h-2zM1542.6 805.2h2v2h-2zM1567.7 805.2h2v2h-2zM8.2 830.3h2v2h-2zM33.4 830.3h2v2h-2zM58.5 830.3h2v2h-2zM83.7 830.3h2v2h-2zM108.8 830.3h2v2h-2zM134.0 830.3h2v2h-2zM159.1 830.3h2v2h-2zM184.3 830.3h2v2h-2zM209.4 830.3h2v2h-2zM234.6 830.3h2v2h-2zM259.7 830.3h2v2h-2zM284.9 830.3h2v2h-2zM310.0 830.3h2v2h-2zM335.2 830.3h2v2h-2zM360.4 830.3h2v2h-2zM385.5 830.3h2v2h-2zM410.7 830.3h2v2h-2zM435.8 830.3h2v2h-2zM461.0 830.3h2v2h-2zM486.1 830.3h2v2h-2zM511.3 830.3h2v2h-2zM536.4 830.3h2v2h-2zM561.6 830.3h2v2h-2zM586.7 830.3h2v2h-2zM611.9 830.3h2v2h-2zM637.1 830.3h2v2h-2zM662.2 830.3h2v2h-2zM687.4 830.3h2v2h-2zM712.5 830.3h2v2h-2zM737.7 830.3h2v2h-2zM762.8 830.3h2v2h-2zM788.0 830.3h2v2h-2zM813.1 830.3h2v2h-2zM838.3 830.3h2v2h-2zM863.4 830.3h2v2h-2zM888.6 830.3h2v2h-2zM913.7 830.3h2v2h-2zM938.9 830.3h2v2h-2zM964.1 830.3h2v2h-2zM989.2 830.3h2v2h-2zM1014.4 830.3h2v2h-2zM1039.5 830.3h2v2h-2zM1064.7 830.3h2v2h-2zM1089.8 830.3h2v2h-2zM1115.0 830.3h2v2h-2zM1140.1 830.3h2v2h-2zM1165.3 830.3h2v2h-2zM1190.4 830.3h2v2h-2zM1215.6 830.3h2v2h-2zM1240.7 830.3h2v2h-2zM1265.9 830.3h2v2h-2zM1291.1 830.3h2v2h-2zM1316.2 830.3h2v2h-2zM1341.4 830.3h2v2h-2zM1366.5 830.3h2v2h-2zM1391.7 830.3h2v2h-2zM1416.8 830.3h2v2h-2zM1442.0 830.3h2v2h-2zM1467.1 830.3h2v2h-2zM1492.3 830.3h2v2h-2zM1517.4 830.3h2v2h-2zM1542.6 830.3h2v2h-2zM1567.7 830.3h2v2h-2zM8.2 855.5h2v2h-2zM33.4 855.5h2v2h-2zM58.5 855.5h2v2h-2zM83.7 855.5h2v2h-2zM108.8 855.5h2v2h-2zM134.0 855.5h2v2h-2zM159.1 855.5h2v2h-2zM184.3 855.5h2v2h-2zM209.4 855.5h2v2h-2zM234.6 855.5h2v2h-2zM259.7 855.5h2v2h-2zM284.9 855.5h2v2h-2zM310.0 855.5h2v2h-2zM335.2 855.5h2v2h-2zM360.4 855.5h2v2h-2zM385.5 855.5h2v2h-2zM410.7 855.5h2v2h-2zM435.8 855.5h2v2h-2zM461.0 855.5h2v2h-2zM486.1 855.5h2v2h-2zM511.3 855.5h2v2h-2zM536.4 855.5h2v2h-2zM561.6 855.5h2v2h-2zM586.7 855.5h2v2h-2zM611.9 855.5h2v2h-2zM637.1 855.5h2v2h-2zM662.2 855.5h2v2h-2zM687.4 855.5h2v2h-2zM712.5 855.5h2v2h-2zM737.7 855.5h2v2h-2zM762.8 855.5h2v2h-2zM788.0 855.5h2v2h-2zM813.1 855.5h2v2h-2zM838.3 855.5h2v2h-2zM863.4 855.5h2v2h-2zM888.6 855.5h2v2h-2zM913.7 855.5h2v2h-2zM938.9 855.5h2v2h-2zM964.1 855.5h2v2h-2zM989.2 855.5h2v2h-2zM1014.4 855.5h2v2h-2zM1039.5 855.5h2v2h-2zM1064.7 855.5h2v2h-2zM1089.8 855.5h2v2h-2zM1115.0 855.5h2v2h-2zM1140.1 855.5h2v2h-2zM1165.3 855.5h2v2h-2zM1190.4 855.5h2v2h-2zM1215.6 855.5h2v2h-2zM1240.7 855.5h2v2h-2zM1265.9 855.5h2v2h-2zM1291.1 855.5h2v2h-2zM1316.2 855.5h2v2h-2zM1341.4 855.5h2v2h-2zM1366.5 855.5h2v2h-2zM1391.7 855.5h2v2h-2zM1416.8 855.5h2v2h-2zM1442.0 855.5h2v2h-2zM1467.1 855.5h2v2h-2zM1492.3 855.5h2v2h-2zM1517.4 855.5h2v2h-2zM1542.6 855.5h2v2h-2zM1567.7 855.5h2v2h-2zM8.2 880.6h2v2h-2zM33.4 880.6h2v2h-2zM58.5 880.6h2v2h-2zM83.7 880.6h2v2h-2zM108.8 880.6h2v2h-2zM134.0 880.6h2v2h-2zM159.1 880.6h2v2h-2zM184.3 880.6h2v2h-2zM209.4 880.6h2v2h-2zM234.6 880.6h2v2h-2zM259.7 880.6h2v2h-2zM284.9 880.6h2v2h-2zM310.0 880.6h2v2h-2zM335.2 880.6h2v2h-2zM360.4 880.6h2v2h-2zM385.5 880.6h2v2h-2zM410.7 880.6h2v2h-2zM435.8 880.6h2v2h-2zM461.0 880.6h2v2h-2zM486.1 880.6h2v2h-2zM511.3 880.6h2v2h-2zM536.4 880.6h2v2h-2zM561.6 880.6h2v2h-2zM586.7 880.6h2v2h-2zM611.9 880.6h2v2h-2zM637.1 880.6h2v2h-2zM662.2 880.6h2v2h-2zM687.4 880.6h2v2h-2zM712.5 880.6h2v2h-2zM737.7 880.6h2v2h-2zM762.8 880.6h2v2h-2zM788.0 880.6h2v2h-2zM813.1 880.6h2v2h-2zM838.3 880.6h2v2h-2zM863.4 880.6h2v2h-2zM888.6 880.6h2v2h-2zM913.7 880.6h2v2h-2zM938.9 880.6h2v2h-2zM964.1 880.6h2v2h-2zM989.2 880.6h2v2h-2zM1014.4 880.6h2v2h-2zM1039.5 880.6h2v2h-2zM1064.7 880.6h2v2h-2zM1089.8 880.6h2v2h-2zM1115.0 880.6h2v2h-2zM1140.1 880.6h2v2h-2zM1165.3 880.6h2v2h-2zM1190.4 880.6h2v2h-2zM1215.6 880.6h2v2h-2zM1240.7 880.6h2v2h-2zM1265.9 880.6h2v2h-2zM1291.1 880.6h2v2h-2zM1316.2 880.6h2v2h-2zM1341.4 880.6h2v2h-2zM1366.5 880.6h2v2h-2zM1391.7 880.6h2v2h-2zM1416.8 880.6h2v2h-2zM1442.0 880.6h2v2h-2zM1467.1 880.6h2v2h-2zM1492.3 880.6h2v2h-2zM1517.4 880.6h2v2h-2zM1542.6 880.6h2v2h-2zM1567.7 880.6h2v2h-2zM8.2 905.8h2v2h-2zM33.4 905.8h2v2h-2zM58.5 905.8h2v2h-2zM83.7 905.8h2v2h-2zM108.8 905.8h2v2h-2zM134.0 905.8h2v2h-2zM159.1 905.8h2v2h-2zM184.3 905.8h2v2h-2zM209.4 905.8h2v2h-2zM234.6 905.8h2v2h-2zM259.7 905.8h2v2h-2zM284.9 905.8h2v2h-2zM310.0 905.8h2v2h-2zM335.2 905.8h2v2h-2zM360.4 905.8h2v2h-2zM385.5 905.8h2v2h-2zM410.7 905.8h2v2h-2zM435.8 905.8h2v2h-2zM461.0 905.8h2v2h-2zM486.1 905.8h2v2h-2zM511.3 905.8h2v2h-2zM536.4 905.8h2v2h-2zM561.6 905.8h2v2h-2zM586.7 905.8h2v2h-2zM611.9 905.8h2v2h-2zM637.1 905.8h2v2h-2zM662.2 905.8h2v2h-2zM687.4 905.8h2v2h-2zM712.5 905.8h2v2h-2zM737.7 905.8h2v2h-2zM762.8 905.8h2v2h-2zM788.0 905.8h2v2h-2zM813.1 905.8h2v2h-2zM838.3 905.8h2v2h-2zM863.4 905.8h2v2h-2zM888.6 905.8h2v2h-2zM913.7 905.8h2v2h-2zM938.9 905.8h2v2h-2zM964.1 905.8h2v2h-2zM989.2 905.8h2v2h-2zM1014.4 905.8h2v2h-2zM1039.5 905.8h2v2h-2zM1064.7 905.8h2v2h-2zM1089.8 905.8h2v2h-2zM1115.0 905.8h2v2h-2zM1140.1 905.8h2v2h-2zM1165.3 905.8h2v2h-2zM1190.4 905.8h2v2h-2zM1215.6 905.8h2v2h-2zM1240.7 905.8h2v2h-2zM1265.9 905.8h2v2h-2zM1291.1 905.8h2v2h-2zM1316.2 905.8h2v2h-2zM1341.4 905.8h2v2h-2zM1366.5 905.8h2v2h-2zM1391.7 905.8h2v2h-2zM1416.8 905.8h2v2h-2zM1442.0 905.8h2v2h-2zM1467.1 905.8h2v2h-2zM1492.3 905.8h2v2h-2zM1517.4 905.8h2v2h-2zM1542.6 905.8h2v2h-2zM1567.7 905.8h2v2h-2zM8.2 931.0h2v2h-2zM33.4 931.0h2v2h-2zM58.5 931.0h2v2h-2zM83.7 931.0h2v2h-2zM108.8 931.0h2v2h-2zM134.0 931.0h2v2h-2zM159.1 931.0h2v2h-2zM184.3 931.0h2v2h-2zM209.4 931.0h2v2h-2zM234.6 931.0h2v2h-2zM259.7 931.0h2v2h-2zM284.9 931.0h2v2h-2zM310.0 931.0h2v2h-2zM335.2 931.0h2v2h-2zM360.4 931.0h2v2h-2zM385.5 931.0h2v2h-2zM410.7 931.0h2v2h-2zM435.8 931.0h2v2h-2zM461.0 931.0h2v2h-2zM486.1 931.0h2v2h-2zM511.3 931.0h2v2h-2zM536.4 931.0h2v2h-2zM561.6 931.0h2v2h-2zM586.7 931.0h2v2h-2zM611.9 931.0h2v2h-2zM637.1 931.0h2v2h-2zM662.2 931.0h2v2h-2zM687.4 931.0h2v2h-2zM712.5 931.0h2v2h-2zM737.7 931.0h2v2h-2zM762.8 931.0h2v2h-2zM788.0 931.0h2v2h-2zM813.1 931.0h2v2h-2zM838.3 931.0h2v2h-2zM863.4 931.0h2v2h-2zM888.6 931.0h2v2h-2zM913.7 931.0h2v2h-2zM938.9 931.0h2v2h-2zM964.1 931.0h2v2h-2zM989.2 931.0h2v2h-2zM1014.4 931.0h2v2h-2zM1039.5 931.0h2v2h-2zM1064.7 931.0h2v2h-2zM1089.8 931.0h2v2h-2zM1115.0 931.0h2v2h-2zM1140.1 931.0h2v2h-2zM1165.3 931.0h2v2h-2zM1190.4 931.0h2v2h-2zM1215.6 931.0h2v2h-2zM1240.7 931.0h2v2h-2zM1265.9 931.0h2v2h-2zM1291.1 931.0h2v2h-2zM1316.2 931.0h2v2h-2zM1341.4 931.0h2v2h-2zM1366.5 931.0h2v2h-2zM1391.7 931.0h2v2h-2zM1416.8 931.0h2v2h-2zM1442.0 931.0h2v2h-2zM1467.1 931.0h2v2h-2zM1492.3 931.0h2v2h-2zM1517.4 931.0h2v2h-2zM1542.6 931.0h2v2h-2zM1567.7 931.0h2v2h-2zM8.2 956.1h2v2h-2zM33.4 956.1h2v2h-2zM58.5 956.1h2v2h-2zM83.7 956.1h2v2h-2zM108.8 956.1h2v2h-2zM134.0 956.1h2v2h-2zM159.1 956.1h2v2h-2zM184.3 956.1h2v2h-2zM209.4 956.1h2v2h-2zM234.6 956.1h2v2h-2zM259.7 956.1h2v2h-2zM284.9 956.1h2v2h-2zM310.0 956.1h2v2h-2zM335.2 956.1h2v2h-2zM360.4 956.1h2v2h-2zM385.5 956.1h2v2h-2zM410.7 956.1h2v2h-2zM435.8 956.1h2v2h-2zM461.0 956.1h2v2h-2zM486.1 956.1h2v2h-2zM511.3 956.1h2v2h-2zM536.4 956.1h2v2h-2zM561.6 956.1h2v2h-2zM586.7 956.1h2v2h-2zM611.9 956.1h2v2h-2zM637.1 956.1h2v2h-2zM662.2 956.1h2v2h-2zM687.4 956.1h2v2h-2zM712.5 956.1h2v2h-2zM737.7 956.1h2v2h-2zM762.8 956.1h2v2h-2zM788.0 956.1h2v2h-2zM813.1 956.1h2v2h-2zM838.3 956.1h2v2h-2zM863.4 956.1h2v2h-2zM888.6 956.1h2v2h-2zM913.7 956.1h2v2h-2zM938.9 956.1h2v2h-2zM964.1 956.1h2v2h-2zM989.2 956.1h2v2h-2zM1014.4 956.1h2v2h-2zM1039.5 956.1h2v2h-2zM1064.7 956.1h2v2h-2zM1089.8 956.1h2v2h-2zM1115.0 956.1h2v2h-2zM1140.1 956.1h2v2h-2zM1165.3 956.1h2v2h-2zM1190.4 956.1h2v2h-2zM1215.6 956.1h2v2h-2zM1240.7 956.1h2v2h-2zM1265.9 956.1h2v2h-2zM1291.1 956.1h2v2h-2zM1316.2 956.1h2v2h-2zM1341.4 956.1h2v2h-2zM1366.5 956.1h2v2h-2zM1391.7 956.1h2v2h-2zM1416.8 956.1h2v2h-2zM1442.0 956.1h2v2h-2zM1467.1 956.1h2v2h-2zM1492.3 956.1h2v2h-2zM1517.4 956.1h2v2h-2zM1542.6 956.1h2v2h-2zM1567.7 956.1h2v2h-2z" fill="#262626"/></svg><svg style="left:0;top:0" width="1584" height="971"><defs><linearGradient id="g1" gradientUnits="userSpaceOnUse" x1="511.7" y1="0" x2="1378" y2="0"><stop offset="0" stop-color="#d4d42a"/><stop offset="0.25" stop-color="#d2d42b"/><stop offset="0.35" stop-color="#c6d632"/><stop offset="0.5" stop-color="#a2d848"/><stop offset="0.62" stop-color="#7ad258"/><stop offset="0.72" stop-color="#68cc60"/><stop offset="1" stop-color="#64c864"/></linearGradient></defs><path d="M511.7 203 C601.7 203 1288.2 278.7 1378.2 278.7" fill="none" stroke="rgba(0,0,0,.45)" stroke-width="5.2"/><path d="M511.7 203 C601.7 203 1288.2 278.7 1378.2 278.7" fill="none" stroke="url(#g1)" stroke-width="3"/><path d="M489 609 C516.0 609 530.0 725 557 725" fill="none" stroke="rgba(0,0,0,.45)" stroke-width="5.2"/><path d="M489 609 C516.0 609 530.0 725 557 725" fill="none" stroke="#f3f3c2" stroke-width="3"/><path d="M745.3 604.1 C765.3 604.1 863.0 585.1 883 585.1" fill="none" stroke="rgba(0,0,0,.45)" stroke-width="5.2"/><path d="M745.3 604.1 C765.3 604.1 863.0 585.1 883 585.1" fill="none" stroke="#6464c8" stroke-width="3"/></svg><div style="left:210.00px;top:159.00px;width:302.00px;height:340.60px;background:#303030;border-radius:5px;box-shadow:0 1px 3px rgba(0,0,0,.45),0 2px 9px 1px rgba(0,0,0,.4);overflow:hidden"><div style="left:0;top:0;width:302.00px;height:25px;background:#79461d"></div><div style="left:0;top:25px;width:302.00px;height:1px;background:#79461d;filter:brightness(.65)"></div></div><div class="t" style="left:242.30px;top:162px;color:#e6e6e6;transform-origin:0 0;transform:scaleX(0.9444);text-shadow:0 1px 2px rgba(0,0,0,.45)">cloth_Original.png.001</div><div class="t tr" style="right:1086.40px;top:194px;color:#e6e6e6;transform:scaleX(0.9490);">Color</div><div class="t tr" style="right:1086.40px;top:222px;color:#e6e6e6;">Alpha</div><div style="left:223.00px;top:252.00px;width:275.30px;height:24.60px;background:#3b3b3b;border-radius:5px;"></div><div style="left:224.00px;top:253.00px;width:38.40px;height:22.80px;background:#282828;border-radius:4px 0 0 4px;"></div><div style="left:263.00px;top:253.00px;width:135.30px;height:22.80px;background:#1c1c1c;border-radius:0;"></div><div style="left:398.30px;top:253.00px;width:25.00px;height:22.80px;background:#545454;border-radius:0;"></div><div style="left:424.20px;top:253.00px;width:24.20px;height:22.80px;background:#545454;border-radius:0;"></div><div style="left:449.30px;top:253.00px;width:24.10px;height:22.80px;background:#545454;border-radius:0;"></div><div style="left:474.30px;top:253.00px;width:23.90px;height:22.80px;background:#545454;border-radius:0 4px 4px 0;"></div><div class="t" style="left:272.20px;top:255px;color:#e6e6e6;transform-origin:0 0;">cloth_Original.p...</div><div style="left:223.20px;top:284.30px;width:275.40px;height:24.90px;background:#282828;border:1px solid #414141;border-radius:5px;box-sizing:border-box"></div><div class="t" style="left:233.30px;top:287px;color:#e6e6e6;transform-origin:0 0;">Linear</div><div style="left:223.20px;top:315.70px;width:275.40px;height:24.90px;background:#282828;border:1px solid #414141;border-radius:5px;box-sizing:border-box"></div><div class="t" style="left:233.30px;top:318px;color:#e6e6e6;transform-origin:0 0;">Flat</div><div style="left:223.20px;top:347.10px;width:275.40px;height:24.90px;background:#282828;border:1px solid #414141;border-radius:5px;box-sizing:border-box"></div><div class="t" style="left:233.30px;top:350px;color:#e6e6e6;transform-origin:0 0;">Repeat</div><div style="left:223.20px;top:378.50px;width:275.40px;height:24.90px;background:#282828;border:1px solid #414141;border-radius:5px;box-sizing:border-box"></div><div class="t" style="left:233.30px;top:381px;color:#e6e6e6;transform-origin:0 0;transform:scaleX(0.9537);">Single Image</div><div class="t" style="left:224.50px;top:413px;color:#e6e6e6;transform-origin:0 0;">Color Space</div><div style="left:319.20px;top:410.30px;width:179.40px;height:24.80px;background:#282828;border:1px solid #414141;border-radius:5px;box-sizing:border-box"></div><div class="t" style="left:329.10px;top:413px;color:#e6e6e6;transform-origin:0 0;">sRGB</div><div class="t" style="left:224.50px;top:444px;color:#e6e6e6;transform-origin:0 0;">Alpha</div><div style="left:319.20px;top:441.40px;width:179.40px;height:24.80px;background:#282828;border:1px solid #414141;border-radius:5px;box-sizing:border-box"></div><div class="t" style="left:329.10px;top:444px;color:#e6e6e6;transform-origin:0 0;">Straight</div><div class="t" style="left:224.30px;top:472px;color:#e6e6e6;transform-origin:0 0;">Vector</div><div style="left:187.00px;top:565.00px;width:302.00px;height:340.60px;background:#303030;border-radius:5px;box-shadow:0 1px 3px rgba(0,0,0,.45),0 2px 9px 1px rgba(0,0,0,.4);overflow:hidden"><div style="left:0;top:0;width:302.00px;height:25px;background:#79461d"></div><div style="left:0;top:25px;width:302.00px;height:1px;background:#79461d;filter:brightness(.65)"></div></div><div style="left:185.50px;top:563.50px;width:305.00px;height:343.60px;border:1.8px solid #f2f2f2;border-radius:6.5px;box-sizing:border-box"></div><div class="t" style="left:220.20px;top:569px;color:#e6e6e6;transform-origin:0 0;transform:scaleX(0.9210);text-shadow:0 1px 2px rgba(0,0,0,.45)">jogging suit_normal.png</div><div class="t tr" style="right:1109.40px;top:600px;color:#e6e6e6;transform:scaleX(0.9490);">Color</div><div class="t tr" style="right:1109.40px;top:628px;color:#e6e6e6;">Alpha</div><div style="left:200.00px;top:658.00px;width:275.30px;height:24.60px;background:#3b3b3b;border-radius:5px;"></div><div style="left:201.00px;top:659.00px;width:38.40px;height:22.80px;background:#282828;border-radius:4px 0 0 4px;"></div><div style="left:240.00px;top:659.00px;width:135.30px;height:22.80px;background:#1c1c1c;border-radius:0;"></div><div style="left:375.30px;top:659.00px;width:25.00px;height:22.80px;background:#545454;border-radius:0;"></div><div style="left:401.20px;top:659.00px;width:24.20px;height:22.80px;background:#545454;border-radius:0;"></div><div style="left:426.30px;top:659.00px;width:24.10px;height:22.80px;background:#545454;border-radius:0;"></div><div style="left:451.30px;top:659.00px;width:23.90px;height:22.80px;background:#545454;border-radius:0 4px 4px 0;"></div><div class="t" style="left:249.20px;top:661px;color:#e6e6e6;transform-origin:0 0;">jogging suit_nor...</div><div style="left:200.20px;top:690.30px;width:275.40px;height:24.90px;background:#282828;border:1px solid #414141;border-radius:5px;box-sizing:border-box"></div><div class="t" style="left:210.30px;top:693px;color:#e6e6e6;transform-origin:0 0;">Linear</div><div style="left:200.20px;top:721.70px;width:275.40px;height:24.90px;background:#282828;border:1px solid #414141;border-radius:5px;box-sizing:border-box"></div><div class="t" style="left:210.30px;top:724px;color:#e6e6e6;transform-origin:0 0;">Flat</div><div style="left:200.20px;top:753.10px;width:275.40px;height:24.90px;background:#282828;border:1px solid #414141;border-radius:5px;box-sizing:border-box"></div><div class="t" style="left:210.30px;top:756px;color:#e6e6e6;transform-origin:0 0;">Repeat</div><div style="left:200.20px;top:784.50px;width:275.40px;height:24.90px;background:#282828;border:1px solid #414141;border-radius:5px;box-sizing:border-box"></div><div class="t" style="left:210.30px;top:787px;color:#e6e6e6;transform-origin:0 0;transform:scaleX(0.9537);">Single Image</div><div class="t" style="left:201.50px;top:819px;color:#e6e6e6;transform-origin:0 0;">Color Space</div><div style="left:296.20px;top:816.30px;width:179.40px;height:24.80px;background:#282828;border:1px solid #414141;border-radius:5px;box-sizing:border-box"></div><div class="t" style="left:306.10px;top:819px;color:#e6e6e6;transform-origin:0 0;">Non<span style="margin:0 1.6px">-</span>Color</div><div class="t" style="left:201.50px;top:850px;color:#7f7f7f;transform-origin:0 0;">Alpha</div><div style="left:296.20px;top:847.40px;width:179.40px;height:24.80px;background:#272727;border:1px solid #343434;border-radius:5px;box-sizing:border-box"></div><div class="t" style="left:306.10px;top:850px;color:#808080;transform-origin:0 0;">Straight</div><div class="t" style="left:201.30px;top:878px;color:#e6e6e6;transform-origin:0 0;">Vector</div><div style="left:557.00px;top:560.00px;width:188.80px;height:184.00px;background:#303030;border-radius:5px;box-shadow:0 1px 3px rgba(0,0,0,.45),0 2px 9px 1px rgba(0,0,0,.4);overflow:hidden"><div style="left:0;top:0;width:188.80px;height:25px;background:#3c3c83"></div><div style="left:0;top:25px;width:188.80px;height:1px;background:#3c3c83;filter:brightness(.65)"></div></div><div class="t" style="left:591.00px;top:564px;color:#e6e6e6;transform-origin:0 0;text-shadow:0 1px 2px rgba(0,0,0,.45)">Normal Map</div><div class="t tr" style="right:852.20px;top:595px;color:#e6e6e6;transform:scaleX(0.9537);">Normal</div><div style="left:571.00px;top:626.40px;width:161.80px;height:24.80px;background:#282828;border:1px solid #414141;border-radius:5px;box-sizing:border-box"></div><div class="t" style="left:580.90px;top:629px;color:#e6e6e6;transform-origin:0 0;">Tangent Space</div><div style="left:570.80px;top:657.90px;width:161.50px;height:23.10px;background:#1c1c1c;border-radius:5px;box-shadow:0 1px 0 #383838"></div><div style="left:570.80px;top:686.10px;width:161.50px;height:23.60px;background:#545454;border-radius:5px;overflow:hidden"></div><div class="t" style="left:590.30px;top:688px;color:#e6e6e6;transform-origin:0 0;">Strength</div><div class="t tr" style="right:869.70px;top:688px;color:#e6e6e6;">1.000</div><div class="t" style="left:571.00px;top:716px;color:#e6e6e6;transform-origin:0 0;transform:scaleX(0.9490);">Color</div><div style="left:883.00px;top:375.60px;width:302.30px;height:406.00px;background:#303030;border-radius:5px;box-shadow:0 1px 3px rgba(0,0,0,.45),0 2px 9px 1px rgba(0,0,0,.4);overflow:hidden"><div style="left:0;top:0;width:302.30px;height:25px;background:#2b652b"></div><div style="left:0;top:25px;width:302.30px;height:1px;background:#2b652b;filter:brightness(.65)"></div></div><div class="t" style="left:915.00px;top:379px;color:#e6e6e6;transform-origin:0 0;transform:scaleX(0.9116);text-shadow:0 1px 2px rgba(0,0,0,.45)">Principled BSDF</div><div class="t tr" style="right:413.50px;top:410px;color:#e6e6e6;transform:scaleX(0.8789);">BSDF</div><div class="t" style="left:895.80px;top:438px;color:#e6e6e6;transform-origin:0 0;transform:scaleX(0.9257);">Base Color</div><div style="left:1012.00px;top:435.90px;width:159.10px;height:22.70px;background:#e6e6e6;border-radius:5px;"></div><div style="left:896.00px;top:462.50px;width:275.00px;height:23.50px;background:#545454;border-radius:5px;overflow:hidden"></div><div class="t" style="left:915.40px;top:465px;color:#e6e6e6;transform-origin:0 0;transform:scaleX(0.9818);">Metallic</div><div class="t tr" style="right:431.00px;top:465px;color:#e6e6e6;">0.000</div><div style="left:896.00px;top:490.80px;width:275.00px;height:23.40px;background:#545454;border-radius:5px;overflow:hidden"><div style="left:0;top:0;width:135.85px;height:23.40px;background:#4772b3"></div></div><div class="t" style="left:915.40px;top:493px;color:#e6e6e6;transform-origin:0 0;">Roughness</div><div class="t tr" style="right:431.00px;top:493px;color:#e6e6e6;">0.500</div><div style="left:896.00px;top:518.70px;width:275.00px;height:23.40px;background:#545454;border-radius:5px;overflow:hidden"></div><div class="t" style="left:915.40px;top:521px;color:#e6e6e6;transform-origin:0 0;">IOR</div><div class="t tr" style="right:431.00px;top:521px;color:#e6e6e6;">1.500</div><div style="left:896.00px;top:546.00px;width:275.00px;height:23.30px;background:#545454;border-radius:5px;overflow:hidden"><div style="left:0;top:0;width:275.00px;height:23.30px;background:#4772b3"></div></div><div class="t" style="left:915.40px;top:548px;color:#e6e6e6;transform-origin:0 0;">Alpha</div><div class="t tr" style="right:431.00px;top:548px;color:#e6e6e6;">1.000</div><div class="t" style="left:896.20px;top:576px;color:#e6e6e6;transform-origin:0 0;transform:scaleX(0.9537);">Normal</div><div class="t" style="left:913.70px;top:601px;color:#e6e6e6;transform-origin:0 0;">Subsurface</div><div class="t" style="left:913.70px;top:626px;color:#e6e6e6;transform-origin:0 0;">Specular</div><div class="t" style="left:913.70px;top:651px;color:#e6e6e6;transform-origin:0 0;">Transmission</div><div class="t" style="left:913.70px;top:677px;color:#e6e6e6;transform-origin:0 0;">Coat</div><div class="t" style="left:913.70px;top:702px;color:#e6e6e6;transform-origin:0 0;">Sheen</div><div class="t" style="left:913.70px;top:727px;color:#e6e6e6;transform-origin:0 0;">Emission</div><div class="t" style="left:913.70px;top:752px;color:#e6e6e6;transform-origin:0 0;">Thin Film</div><div style="left:1378.00px;top:204.30px;width:176.20px;height:175.60px;background:#303030;border-radius:5px;box-shadow:0 1px 3px rgba(0,0,0,.45),0 2px 9px 1px rgba(0,0,0,.4);overflow:hidden"><div style="left:0;top:0;width:176.20px;height:25px;background:#3c1c24"></div><div style="left:0;top:25px;width:176.20px;height:1px;background:#3c1c24;filter:brightness(.65)"></div></div><div class="t" style="left:1409.90px;top:208px;color:#e6e6e6;transform-origin:0 0;text-shadow:0 1px 2px rgba(0,0,0,.45)">Material Output</div><div style="left:1391.30px;top:238.40px;width:150.50px;height:25.80px;background:#282828;border:1px solid #414141;border-radius:5px;box-sizing:border-box"></div><div class="t" style="left:1401.30px;top:242px;color:#e6e6e6;transform-origin:0 0;">All</div><div class="t" style="left:1392.00px;top:269px;color:#e6e6e6;transform-origin:0 0;">Surface</div><div class="t" style="left:1392.00px;top:297px;color:#e6e6e6;transform-origin:0 0;transform:scaleX(0.9631);">Volume</div><div class="t" style="left:1392.00px;top:325px;color:#e6e6e6;transform-origin:0 0;">Displacement</div><div class="t" style="left:1392.00px;top:352px;color:#e6e6e6;transform-origin:0 0;">Thickness</div><svg style="left:0;top:0" width="1584" height="971"><path d="M224.38 169.98 L229.35 174.99 L234.32 169.98" fill="none" stroke="#e6e6e6" stroke-width="1.35"/><circle cx="511.70" cy="203.00" r="6.20" fill="rgba(0,0,0,.6)"/><circle cx="511.70" cy="203.00" r="5.20" fill="#c7c729"/><circle cx="511.70" cy="230.80" r="6.20" fill="rgba(0,0,0,.6)"/><circle cx="511.70" cy="230.80" r="5.20" fill="#a1a1a1"/><g transform="translate(0,0)"><path d="M229.8 268.9 V256.7 H246.2 V272.1 H242.6" fill="none" stroke="#e6e6e6" stroke-width="1.7"/><path d="M228.9 273 L234.9 262.9 L240.7 273 Z" fill="#e6e6e6"/><circle cx="240.9" cy="261.2" r="2" fill="#e6e6e6"/><path d="M410.2 256.6 C408.8 257.9 407 258.2 402.8 258.7 V263.8 C402.8 267.6 405.6 270.2 410.2 272.4 C414.8 270.2 417.6 267.6 417.6 263.8 V258.7 C413.4 258.2 411.6 257.9 410.2 256.6 Z" fill="none" stroke="#c4c4c4" stroke-width="1.25"/><path d="M431.2 260.6 H427.8 V272 H439.9 V268.6" fill="none" stroke="#d0d0d0" stroke-width="1.4"/><path d="M432.8 256.7 H440.2 L444.2 260.7 V267.1 H432.8 Z" fill="none" stroke="#e6e6e6" stroke-width="1.4"/><path d="M440 256.4 L444.6 261 H440 Z" fill="#e6e6e6"/><path d="M452 257.1 H458.2 V259.4 H470 V261.8 H452 Z" fill="#e6e6e6"/><rect x="452" y="263.1" width="18" height="9.9" fill="#e6e6e6"/><path d="M481.2 259.6 L490.8 269.6 M490.8 259.6 L481.2 269.6" fill="none" stroke="#e6e6e6" stroke-width="1.4"/></g><path d="M251.32 263.73 L254.65 267.25 L257.98 263.73" fill="none" stroke="#e6e6e6" stroke-width="1.25"/><path d="M487.43 295.98 L490.65 299.40 L493.88 295.98" fill="none" stroke="#e6e6e6" stroke-width="1.25"/><path d="M487.43 327.38 L490.65 330.80 L493.88 327.38" fill="none" stroke="#e6e6e6" stroke-width="1.25"/><path d="M487.43 358.78 L490.65 362.20 L493.88 358.78" fill="none" stroke="#e6e6e6" stroke-width="1.25"/><path d="M487.43 390.18 L490.65 393.60 L493.88 390.18" fill="none" stroke="#e6e6e6" stroke-width="1.25"/><path d="M487.43 421.93 L490.65 425.35 L493.88 421.93" fill="none" stroke="#e6e6e6" stroke-width="1.25"/><path d="M487.43 453.02 L490.65 456.45 L493.88 453.02" fill="none" stroke="#e6e6e6" stroke-width="1.25"/><circle cx="210.00" cy="481.00" r="6.20" fill="rgba(0,0,0,.6)"/><circle cx="210.00" cy="481.00" r="5.20" fill="#6363c7"/><path d="M201.38 575.97 L206.35 580.99 L211.32 575.97" fill="none" stroke="#e6e6e6" stroke-width="1.35"/><circle cx="488.70" cy="609.00" r="6.20" fill="rgba(0,0,0,.6)"/><circle cx="488.70" cy="609.00" r="5.20" fill="#c7c729"/><circle cx="488.70" cy="636.80" r="6.20" fill="rgba(0,0,0,.6)"/><circle cx="488.70" cy="636.80" r="5.20" fill="#a1a1a1"/><g transform="translate(-23,406)"><path d="M229.8 268.9 V256.7 H246.2 V272.1 H242.6" fill="none" stroke="#e6e6e6" stroke-width="1.7"/><path d="M228.9 273 L234.9 262.9 L240.7 273 Z" fill="#e6e6e6"/><circle cx="240.9" cy="261.2" r="2" fill="#e6e6e6"/><path d="M410.2 256.6 C408.8 257.9 407 258.2 402.8 258.7 V263.8 C402.8 267.6 405.6 270.2 410.2 272.4 C414.8 270.2 417.6 267.6 417.6 263.8 V258.7 C413.4 258.2 411.6 257.9 410.2 256.6 Z" fill="none" stroke="#c4c4c4" stroke-width="1.25"/><path d="M431.2 260.6 H427.8 V272 H439.9 V268.6" fill="none" stroke="#d0d0d0" stroke-width="1.4"/><path d="M432.8 256.7 H440.2 L444.2 260.7 V267.1 H432.8 Z" fill="none" stroke="#e6e6e6" stroke-width="1.4"/><path d="M440 256.4 L444.6 261 H440 Z" fill="#e6e6e6"/><path d="M452 257.1 H458.2 V259.4 H470 V261.8 H452 Z" fill="#e6e6e6"/><rect x="452" y="263.1" width="18" height="9.9" fill="#e6e6e6"/><path d="M481.2 259.6 L490.8 269.6 M490.8 259.6 L481.2 269.6" fill="none" stroke="#e6e6e6" stroke-width="1.4"/></g><path d="M228.32 669.73 L231.65 673.25 L234.98 669.73" fill="none" stroke="#e6e6e6" stroke-width="1.25"/><path d="M464.43 701.98 L467.65 705.40 L470.88 701.98" fill="none" stroke="#e6e6e6" stroke-width="1.25"/><path d="M464.43 733.38 L467.65 736.80 L470.88 733.38" fill="none" stroke="#e6e6e6" stroke-width="1.25"/><path d="M464.43 764.77 L467.65 768.20 L470.88 764.77" fill="none" stroke="#e6e6e6" stroke-width="1.25"/><path d="M464.43 796.18 L467.65 799.60 L470.88 796.18" fill="none" stroke="#e6e6e6" stroke-width="1.25"/><path d="M464.43 827.93 L467.65 831.35 L470.88 827.93" fill="none" stroke="#e6e6e6" stroke-width="1.25"/><path d="M464.43 859.02 L467.65 862.45 L470.88 859.02" fill="none" stroke="#5a5a5a" stroke-width="1.25"/><circle cx="187.00" cy="887.00" r="6.20" fill="rgba(0,0,0,.6)"/><circle cx="187.00" cy="887.00" r="5.20" fill="#6363c7"/><path d="M571.57 570.88 L576.45 575.99 L581.33 570.88" fill="none" stroke="#e6e6e6" stroke-width="1.35"/><circle cx="745.30" cy="604.10" r="6.20" fill="rgba(0,0,0,.6)"/><circle cx="745.30" cy="604.10" r="5.20" fill="#6363c7"/><path d="M721.62 638.02 L724.85 641.45 L728.07 638.02" fill="none" stroke="#e6e6e6" stroke-width="1.25"/><path d="M576 678 V664.3 Q576 662.4 578 662.4 H582.5 V678 Z" fill="#e6e6e6"/><path d="M582.5 662.6 H589" stroke="#e6e6e6" stroke-width="1.1" fill="none"/><rect x="589.2" y="661.5" width="4.2" height="3.7" fill="none" stroke="#e6e6e6" stroke-width="1.1"/><rect x="589.2" y="672.9" width="4.2" height="3.7" fill="none" stroke="#e6e6e6" stroke-width="1.1"/><path d="M591.3 665.2 V672.9 M584.2 675.4 H589.2" stroke="#e6e6e6" stroke-width="1.1" fill="none"/><circle cx="557.00" cy="697.50" r="6.20" fill="rgba(0,0,0,.6)"/><circle cx="557.00" cy="697.50" r="5.20" fill="#a1a1a1"/><circle cx="557.00" cy="725.00" r="6.20" fill="rgba(0,0,0,.6)"/><circle cx="557.00" cy="725.00" r="5.20" fill="#c7c729"/><path d="M897.57 386.07 L902.45 391.09 L907.33 386.07" fill="none" stroke="#e6e6e6" stroke-width="1.35"/><circle cx="1184.70" cy="419.50" r="6.20" fill="rgba(0,0,0,.6)"/><circle cx="1184.70" cy="419.50" r="5.20" fill="#63c763"/><circle cx="883.00" cy="447.00" r="6.20" fill="rgba(0,0,0,.6)"/><circle cx="883.00" cy="447.00" r="5.20" fill="#c7c729"/><circle cx="883.00" cy="474.25" r="6.20" fill="rgba(0,0,0,.6)"/><circle cx="883.00" cy="474.25" r="5.20" fill="#a1a1a1"/><circle cx="883.00" cy="502.50" r="6.20" fill="rgba(0,0,0,.6)"/><circle cx="883.00" cy="502.50" r="5.20" fill="#a1a1a1"/><circle cx="883.00" cy="530.40" r="6.20" fill="rgba(0,0,0,.6)"/><circle cx="883.00" cy="530.40" r="5.20" fill="#a1a1a1"/><circle cx="883.00" cy="557.65" r="6.20" fill="rgba(0,0,0,.6)"/><circle cx="883.00" cy="557.65" r="5.20" fill="#a1a1a1"/><circle cx="883.00" cy="585.10" r="6.20" fill="rgba(0,0,0,.6)"/><circle cx="883.00" cy="585.10" r="5.20" fill="#6363c7"/><path d="M900.65 606.45 L906.12 611.50 L900.65 616.55" fill="none" stroke="#e6e6e6" stroke-width="1.3"/><path d="M900.65 631.65 L906.12 636.70 L900.65 641.75" fill="none" stroke="#e6e6e6" stroke-width="1.3"/><path d="M900.65 656.85 L906.12 661.90 L900.65 666.95" fill="none" stroke="#e6e6e6" stroke-width="1.3"/><path d="M900.65 682.05 L906.12 687.10 L900.65 692.15" fill="none" stroke="#e6e6e6" stroke-width="1.3"/><path d="M900.65 707.25 L906.12 712.30 L900.65 717.35" fill="none" stroke="#e6e6e6" stroke-width="1.3"/><path d="M900.65 732.45 L906.12 737.50 L900.65 742.55" fill="none" stroke="#e6e6e6" stroke-width="1.3"/><path d="M900.65 757.65 L906.12 762.70 L900.65 767.75" fill="none" stroke="#e6e6e6" stroke-width="1.3"/><path d="M1392.58 215.08 L1397.45 219.99 L1402.33 215.08" fill="none" stroke="#e6e6e6" stroke-width="1.35"/><path d="M1530.62 250.53 L1533.85 253.95 L1537.08 250.53" fill="none" stroke="#e6e6e6" stroke-width="1.25"/><circle cx="1378.20" cy="278.70" r="6.20" fill="rgba(0,0,0,.6)"/><circle cx="1378.20" cy="278.70" r="5.20" fill="#63c763"/><circle cx="1378.20" cy="306.30" r="6.20" fill="rgba(0,0,0,.6)"/><circle cx="1378.20" cy="306.30" r="5.20" fill="#63c763"/><circle cx="1378.20" cy="334.00" r="6.20" fill="rgba(0,0,0,.6)"/><circle cx="1378.20" cy="334.00" r="5.20" fill="#6363c7"/><circle cx="1378.20" cy="361.40" r="6.20" fill="rgba(0,0,0,.6)"/><circle cx="1378.20" cy="361.40" r="5.20" fill="#a1a1a1"/></svg></body></html>
